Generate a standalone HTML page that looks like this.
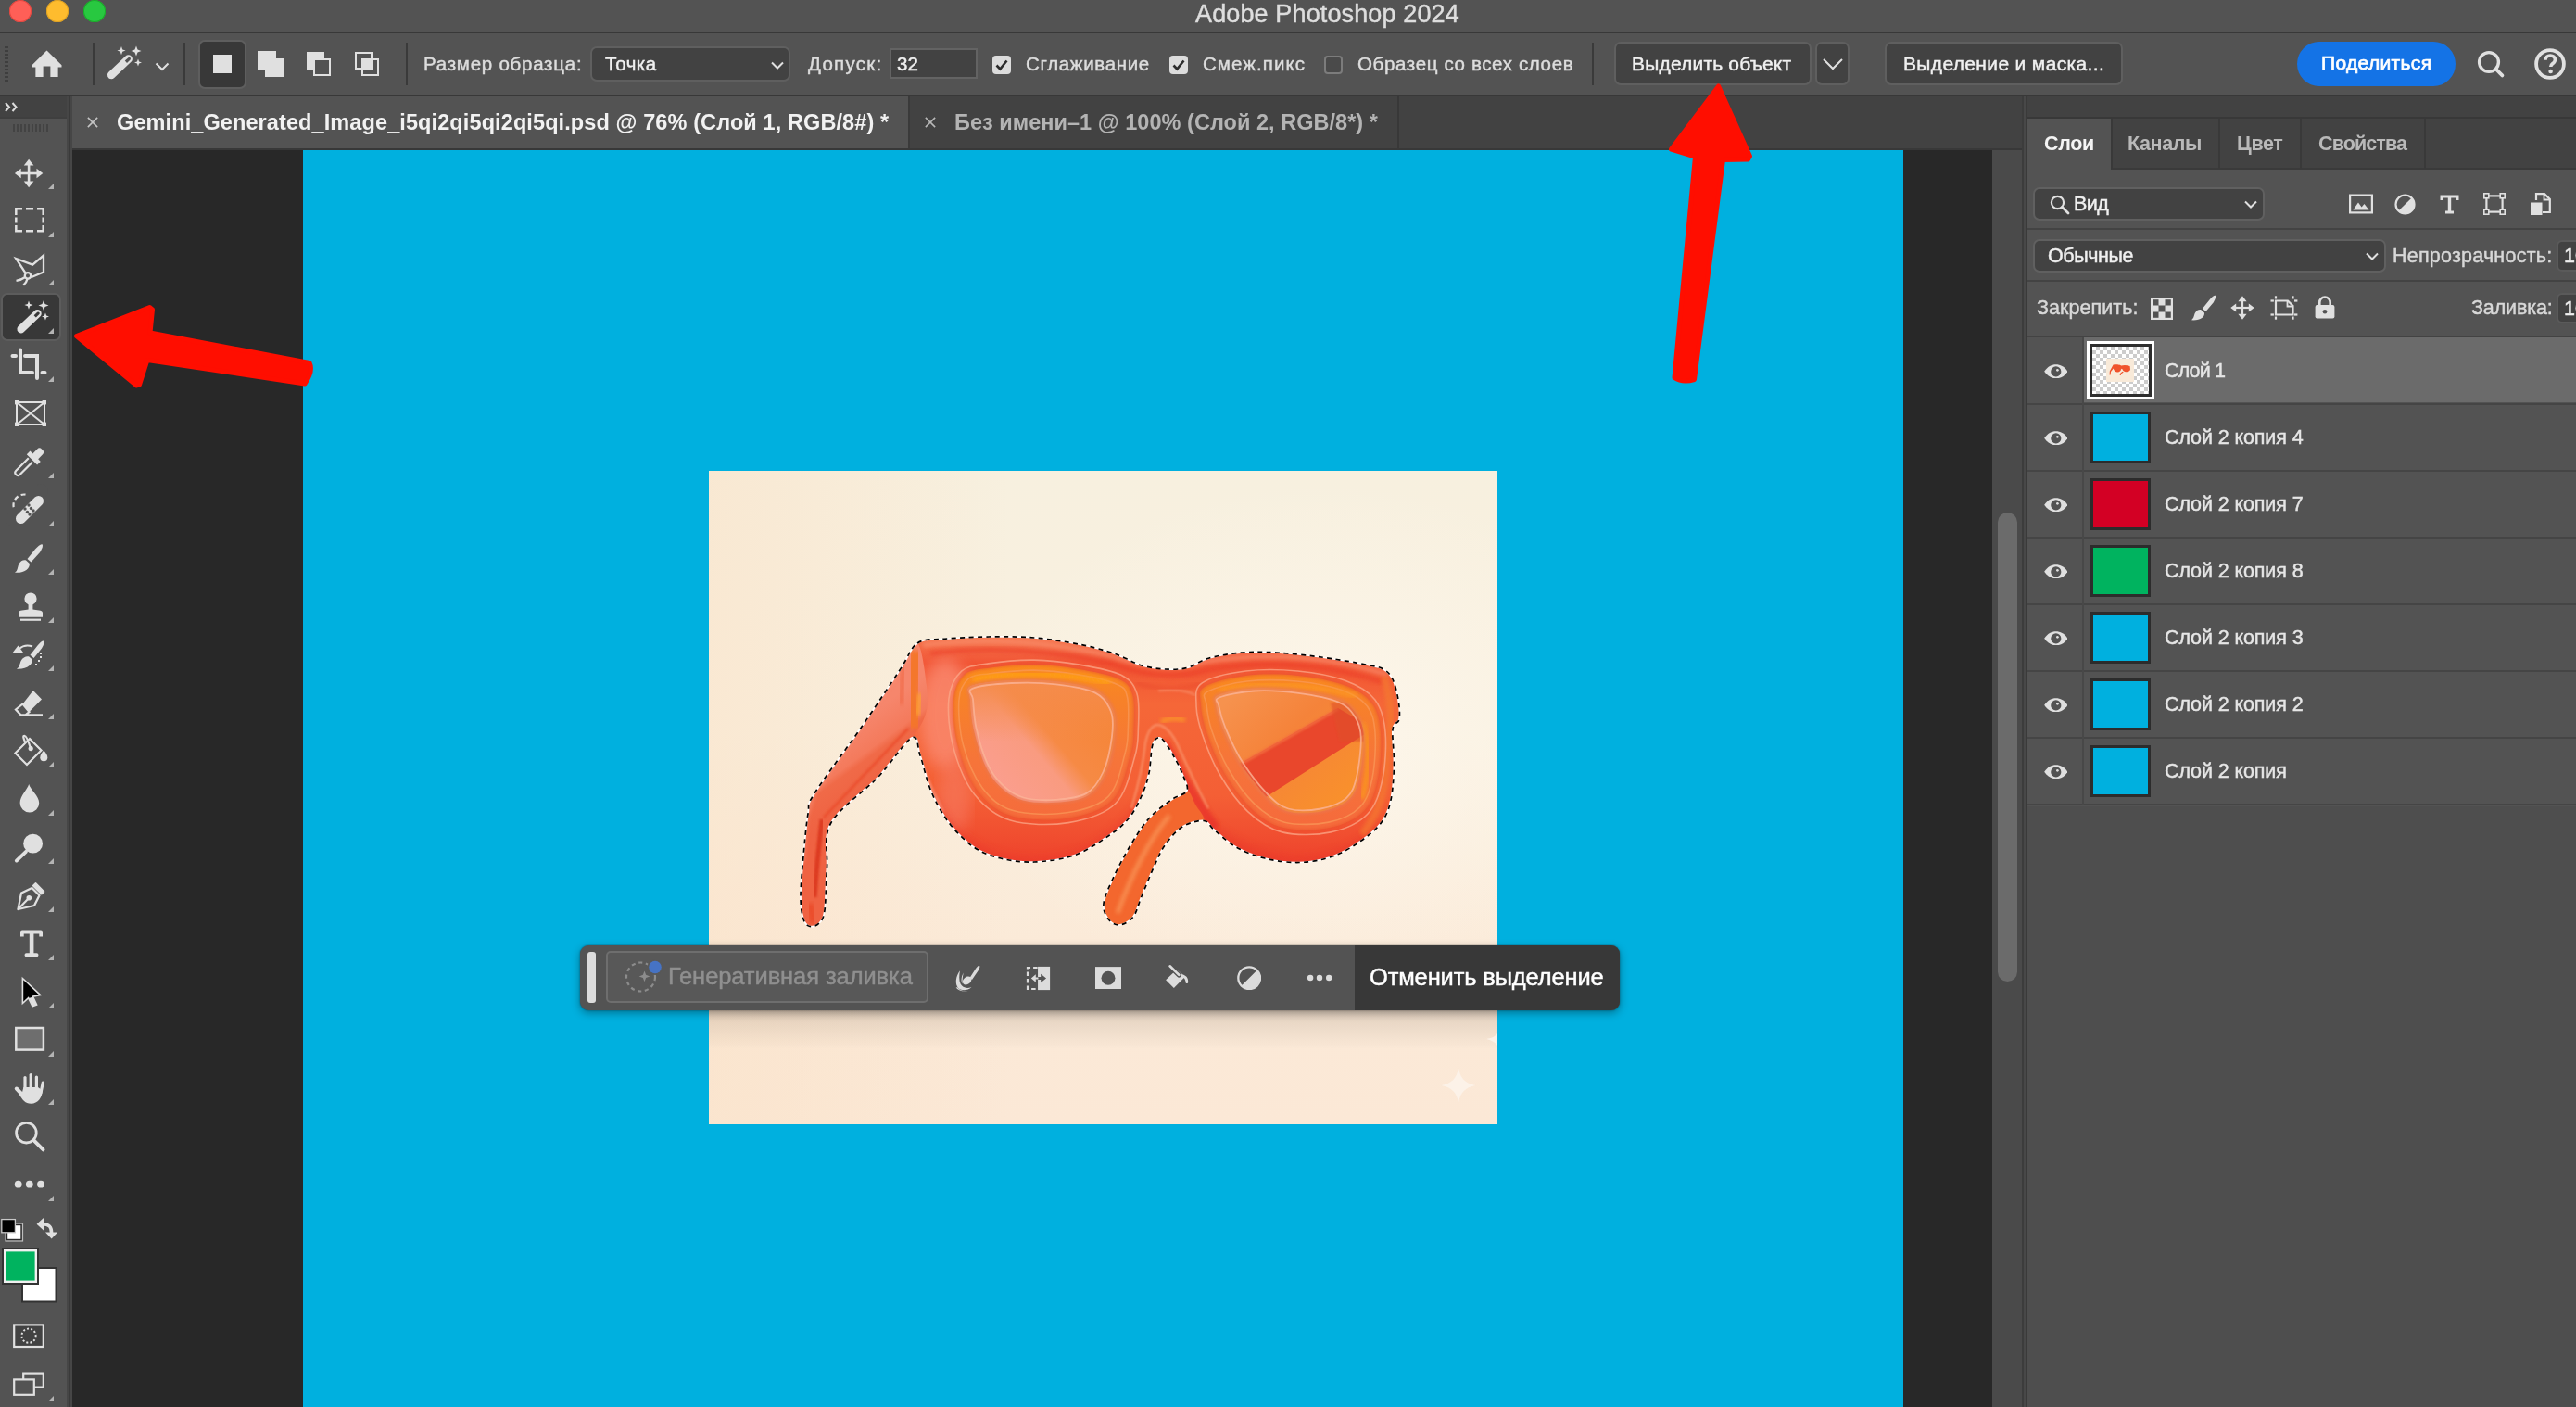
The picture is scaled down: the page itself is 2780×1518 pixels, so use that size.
<!DOCTYPE html>
<html lang="ru">
<head>
<meta charset="utf-8">
<title>Adobe Photoshop 2024</title>
<style>
*{box-sizing:border-box;margin:0;padding:0}
html,body{width:2780px;height:1518px;overflow:hidden;background:#535353}
body{position:relative;font-family:"Liberation Sans",sans-serif;color:#dddddd;-webkit-font-smoothing:antialiased}
.abs{position:absolute}
.t{position:absolute;white-space:nowrap;line-height:1;transform-origin:0 0;will-change:transform;-webkit-text-stroke:0.45px currentColor;paint-order:stroke fill}
.vline{position:absolute;width:2px;background:#3a3a3a}
.hline{position:absolute;height:2px;background:#383838}
/* ---- title bar ---- */
#titlebar{left:0;top:0;width:2780px;height:34px;background:#535353}
.tl{position:absolute;top:0;width:24px;height:24px;border-radius:50%}
/* ---- options bar ---- */
#optbar{left:0;top:36px;width:2780px;height:66px;background:#535353}
.btn{position:absolute;background:#424242;border:2px solid #5f5f5f;border-radius:7px}
.field{position:absolute;background:#424242;border:2px solid #636363}
.cb{position:absolute;width:20px;height:20px;border-radius:4px}
/* ---- doc tabs ---- */
#tabbar{left:78px;top:104px;width:2104px;height:56px;background:#424242}
/* ---- canvas ---- */
#paste{left:78px;top:162px;width:2072px;height:1356px;background:#282828;overflow:hidden}
#blue{left:327px;top:162px;width:1727px;height:1356px;background:#00b0df}
#cream{left:765px;top:508px;width:851px;height:705px;background:radial-gradient(ellipse 45% 40% at 78% 42%,rgba(253,247,236,0.9),rgba(253,247,236,0) 100%),linear-gradient(90deg,rgba(250,226,200,0.55) 0%,rgba(250,226,200,0) 38%),linear-gradient(180deg,#f7f0df 0%,#f9f0df 40%,#fbead8 72%,#fbe8d6 100%)}
/* ---- right panel ---- */
#rpanel{left:2188px;top:104px;width:592px;height:1414px;background:#535353}
.lrow{position:absolute;left:2188px;width:592px;height:72px;border-bottom:2px solid #454545}
.thumb{position:absolute;left:2256px;width:65px;height:55px;border:3px solid #2b2b2b}
.lname{font-size:21.5px;color:#e6e6e6;left:2336px}
</style>
</head>
<body>

<!-- ================= TITLE BAR ================= -->
<div id="titlebar" class="abs"></div>
<div class="tl" style="left:10px;background:#ff5f57;box-shadow:inset 0 0 0 1px #e2463f"></div>
<div class="tl" style="left:50px;background:#febc2e;box-shadow:inset 0 0 0 1px #dea123"></div>
<div class="tl" style="left:90px;background:#28c840;box-shadow:inset 0 0 0 1px #1aab29"></div>
<div class="t" id="title" style="letter-spacing:0.13px;left:1290px;top:2px;font-size:27px;color:#dedede">Adobe Photoshop 2024</div>
<div class="hline" style="left:0;top:34px;width:2780px;background:#383838"></div>

<!-- ================= OPTIONS BAR ================= -->
<div id="optbar" class="abs"></div>

<!-- grip -->
<div class="abs" style="left:5px;top:50px;width:4px;height:38px;background:repeating-linear-gradient(180deg,#3e3e3e 0 2px,transparent 2px 4px)"></div>
<!-- home -->
<svg class="abs" style="left:33.5px;top:54px" width="33" height="29.5" viewBox="0 0 34 31" preserveAspectRatio="none"><path d="M17 0.5 L33.5 17 L33.5 19.5 L29.5 19.5 L29.5 30.5 L21 30.5 L21 18.5 L13 18.5 L13 30.5 L4.5 30.5 L4.5 19.5 L0.5 19.5 L0.5 17 Z" fill="#e0e0e0"/></svg>
<div class="vline" style="left:100px;top:46px;height:46px"></div>
<!-- wand (options) -->
<svg class="abs" style="left:114px;top:48px" width="42" height="40" viewBox="0 0 42 40">
 <g fill="#e0e0e0">
  <path d="M6.2 37.2 a4.3 4.3 0 0 1 -3.2 -7.2 L21.5 12.6 a4.3 4.3 0 0 1 6.2 6 L9.2 36 a4.3 4.3 0 0 1 -3 1.2z"/>
  <path d="M17 2 l1.2 3.4 l3.4 1.2 l-3.4 1.2 l-1.2 3.4 l-1.2 -3.4 l-3.4 -1.2 l3.4 -1.2z"/>
  <path d="M33 1.5 l1.5 4 l4 1.5 l-4 1.5 l-1.5 4 l-1.5 -4 l-4 -1.5 l4 -1.5z"/>
  <path d="M35 15.5 l1.1 2.9 l2.9 1.1 l-2.9 1.1 l-1.1 2.9 l-1.1 -2.9 l-2.9 -1.1 l2.9 -1.1z"/>
 </g>
 <path d="M20.8 17.6 L24.4 14.2 a1.6 1.6 0 0 1 2.2 2.3 L23 20z" fill="#535353"/>
</svg>
<svg class="abs" style="left:167px;top:67px" width="16" height="10" viewBox="0 0 16 10"><path d="M1.5 1.5 L8 8 L14.5 1.5" fill="none" stroke="#e0e0e0" stroke-width="2"/></svg>
<div class="vline" style="left:198px;top:46px;height:46px"></div>
<!-- selection mode buttons -->
<div class="abs" style="left:214px;top:42.5px;width:52px;height:53.5px;background:#383838;border:2px solid #5e5e5e;border-radius:7px"></div>
<div class="abs" style="left:230px;top:59px;width:20px;height:20px;background:#e0e0e0"></div>
<div class="abs" style="left:278px;top:55px;width:20px;height:20px;background:#e0e0e0"></div>
<div class="abs" style="left:286px;top:63px;width:20px;height:20px;background:#e0e0e0"></div>
<div class="abs" style="left:331px;top:56px;width:19px;height:19px;background:#e0e0e0"></div>
<div class="abs" style="left:338px;top:63px;width:19px;height:19px;background:#535353;border:2px solid #e0e0e0"></div>
<div class="abs" style="left:383px;top:56px;width:19px;height:19px;border:2px solid #e0e0e0"></div>
<div class="abs" style="left:390px;top:63px;width:19px;height:19px;border:2px solid #e0e0e0"></div>
<div class="abs" style="left:392px;top:65px;width:8px;height:8px;background:#e0e0e0"></div>
<div class="vline" style="left:438px;top:46px;height:46px"></div>
<div class="t" id="o1" style="letter-spacing:0.75px;left:457px;top:59px;font-size:20.5px">Размер образца:</div>
<div class="btn" style="left:637px;top:50px;width:216px;height:38px"></div>
<div class="t" id="o2" style="letter-spacing:0.43px;left:653px;top:59px;font-size:20.5px;color:#f0f0f0">Точка</div>
<svg class="abs" style="left:832px;top:66px" width="14" height="10" viewBox="0 0 14 10"><path d="M1 1.5 L7 7.5 L13 1.5" fill="none" stroke="#e0e0e0" stroke-width="2"/></svg>
<div class="t" id="o3" style="letter-spacing:1.28px;left:872px;top:59px;font-size:20.5px">Допуск:</div>
<div class="field" style="left:960px;top:52px;width:95px;height:33px"></div>
<div class="t" id="o4" style="left:968px;top:59px;font-size:20.5px;color:#f0f0f0">32</div>
<div class="cb" style="left:1071px;top:60px;background:#dcdcdc"></div>
<svg class="abs" style="left:1071px;top:60px" width="20" height="20" viewBox="0 0 20 20"><path d="M4.5 10.5 L8.3 14.5 L15.5 5.5" fill="none" stroke="#2c2c2c" stroke-width="2.6"/></svg>
<div class="t" id="o5" style="letter-spacing:0.66px;left:1107px;top:59px;font-size:20.5px">Сглаживание</div>
<div class="cb" style="left:1262px;top:60px;background:#dcdcdc"></div>
<svg class="abs" style="left:1262px;top:60px" width="20" height="20" viewBox="0 0 20 20"><path d="M4.5 10.5 L8.3 14.5 L15.5 5.5" fill="none" stroke="#2c2c2c" stroke-width="2.6"/></svg>
<div class="t" id="o6" style="letter-spacing:1.05px;left:1298px;top:59px;font-size:20.5px">Смеж.пикс</div>
<div class="cb" style="left:1429px;top:60px;background:#4a4a4a;border:2px solid #7c7c7c"></div>
<div class="t" id="o7" style="letter-spacing:0.64px;left:1465px;top:59px;font-size:20.5px">Образец со всех слоев</div>
<div class="vline" style="left:1718px;top:46px;height:46px"></div>
<div class="btn" style="left:1742px;top:45px;width:213px;height:47px"></div>
<div class="t" id="o8" style="letter-spacing:0.18px;left:1761px;top:58px;font-size:21px;color:#f0f0f0">Выделить объект</div>
<div class="btn" style="left:1959px;top:45px;width:37px;height:47px"></div>
<svg class="abs" style="left:1966px;top:62px" width="24" height="14" viewBox="0 0 24 14"><path d="M2 2 L12 12 L22 2" fill="none" stroke="#e0e0e0" stroke-width="2"/></svg>
<div class="btn" style="left:2034px;top:45px;width:257px;height:47px"></div>
<div class="t" id="o9" style="letter-spacing:0.35px;left:2054px;top:58px;font-size:21px;color:#f0f0f0">Выделение и маска...</div>
<div class="abs" style="left:2479px;top:45px;width:171px;height:48px;border-radius:24px;background:#1473e6"></div>
<div class="t" id="o10" style="letter-spacing:0.34px;left:2505px;top:57px;font-size:21px;color:#ffffff;-webkit-text-stroke:0.7px #fff">Поделиться</div>
<svg class="abs" style="left:2672px;top:53px" width="34" height="34" viewBox="0 0 34 34"><circle cx="14" cy="14" r="10.4" fill="none" stroke="#e0e0e0" stroke-width="3.4"/><path d="M22 22 L28.4 28.4" stroke="#e0e0e0" stroke-width="3.8" stroke-linecap="round"/></svg>
<svg class="abs" style="left:2734px;top:51px" width="36" height="36" viewBox="0 0 36 36"><circle cx="18" cy="18" r="14.9" fill="none" stroke="#e0e0e0" stroke-width="3.8"/><path d="M13 13.8 c0 -3 2.2 -4.8 5.2 -4.8 c3 0 5.2 1.7 5.2 4.4 c0 2.2 -1.3 3.2 -2.8 4.3 c-1.3 1 -1.9 1.6 -1.9 3.3" fill="none" stroke="#e0e0e0" stroke-width="3.6"/><circle cx="18.6" cy="26" r="2.3" fill="#e0e0e0"/></svg>
<div class="hline" style="left:0;top:102px;width:2780px;background:#383838"></div>

<!-- ================= DOC TAB BAR ================= -->
<div id="tabbar" class="abs"></div>
<div class="abs" style="left:78px;top:104px;width:902px;height:56px;background:#535353"></div>
<div class="vline" style="left:980px;top:104px;height:56px;background:#3a3a3a"></div>
<div class="vline" style="left:1508px;top:104px;height:56px;background:#383838"></div>
<svg class="abs" style="left:94px;top:126px" width="12" height="12" viewBox="0 0 14 14"><path d="M1 1 L13 13 M13 1 L1 13" stroke="#c4c4c4" stroke-width="1.8"/></svg>
<div class="t" id="tab1" style="letter-spacing:0.10px;left:126px;top:121px;font-size:23.5px;font-weight:bold;-webkit-text-stroke:0;color:#f2f2f2">Gemini_Generated_Image_i5qi2qi5qi2qi5qi.psd @ 76% (Слой 1, RGB/8#) *</div>
<svg class="abs" style="left:998px;top:126px" width="12" height="12" viewBox="0 0 14 14"><path d="M1 1 L13 13 M13 1 L1 13" stroke="#b8b8b8" stroke-width="1.8"/></svg>
<div class="t" id="tab2" style="letter-spacing:0.03px;left:1030px;top:121px;font-size:23.5px;font-weight:bold;-webkit-text-stroke:0;color:#b4b4b4">Без имени–1 @ 100% (Слой 2, RGB/8*) *</div>
<div class="hline" style="left:78px;top:160px;width:2104px;background:#383838"></div>



<!-- ================= LEFT TOOLBAR ================= -->
<div class="abs" style="left:0;top:104px;width:72px;height:1414px;background:#535353"></div>
<div class="abs" style="left:0;top:104px;width:72px;height:22px;background:#424242"></div>
<div class="hline" style="left:0;top:126px;width:72px;background:#3f3f3f"></div>
<div class="abs" style="left:72px;top:104px;width:6px;height:1414px;background:#464646"></div>
<div class="abs" style="left:74px;top:104px;width:2px;height:1414px;background:#3a3a3a"></div>
<svg class="abs" style="left:5px;top:110px" width="15" height="11" viewBox="0 0 15 11"><path d="M1 1 L5 5.5 L1 10 M8.5 1 L12.5 5.5 L8.5 10" fill="none" stroke="#dcdcdc" stroke-width="2"/></svg>
<div class="abs" style="left:14px;top:134px;width:38px;height:8px;background:repeating-linear-gradient(90deg,#434343 0 2px,transparent 2px 4px)"></div>
<!-- selected tool bg -->
<div class="abs" style="left:1px;top:316px;width:65px;height:52px;background:#383838;border:2px solid #5c5c5c;border-radius:7px"></div>
<!--TOOLS_START--><svg class="abs" style="left:0;top:104px" width="72" height="1414" viewBox="0 104 72 1414">
<g fill="#e0e0e0" stroke="none"><rect x="29.8" y="176" width="2.6" height="22"/><rect x="20" y="185.7" width="22" height="2.6"/>
<path d="M31.1 171.8 L36.4 178.6 L25.8 178.6 Z M31.1 202.2 L36.4 195.4 L25.8 195.4 Z M15.9 187 L22.7 181.7 L22.7 192.3 Z M46.3 187 L39.5 181.7 L39.5 192.3 Z"/></g><path d="M58 198 L58 204 L52 204 Z" fill="#b4b4b4"/>
<path d="M17.3 232 V225.3 H24 M28 225.3 H36 M40 225.3 H46.7 V232 M46.7 234.5 V240.5 M46.7 243 V249.2 H40 M36 249.2 H28 M24 249.2 H17.3 V243 M17.3 240.5 V234.5" fill="none" stroke="#e0e0e0" stroke-width="2.5"/><path d="M58 250 L58 256 L52 256 Z" fill="#b4b4b4"/>
<g fill="none" stroke="#e0e0e0" stroke-width="2.3" stroke-linejoin="miter"><path d="M27.6 294.6 L17.3 279 L35.2 285.6 L47 275.6 V293.6 L33.4 299.2"/><circle cx="30" cy="297.4" r="3.2"/><path d="M27.2 299 Q23 302 17.5 302.8 M29.6 300.6 Q28.5 305 25.3 307.6"/></g><path d="M58 302 L58 308 L52 308 Z" fill="#b4b4b4"/>
<g fill="#e0e0e0"><path d="M22.6 359.4 a4.3 4.3 0 0 1 -3.2 -7.2 L37.3 335.2 a4.3 4.3 0 0 1 6.2 6 L25.6 358.2 a4.3 4.3 0 0 1 -3 1.2z"/>
<path d="M31 324.5 l1.2 3.4 l3.4 1.2 l-3.4 1.2 l-1.2 3.4 l-1.2 -3.4 l-3.4 -1.2 l3.4 -1.2z"/>
<path d="M47 324 l1.5 4 l4 1.5 l-4 1.5 l-1.5 4 l-1.5 -4 l-4 -1.5 l4 -1.5z"/>
<path d="M49 337.5 l1.1 2.9 l2.9 1.1 l-2.9 1.1 l-1.1 2.9 l-1.1 -2.9 l-2.9 -1.1 l2.9 -1.1z"/></g>
<path d="M36.6 340.2 L40.2 336.8 a1.6 1.6 0 0 1 2.2 2.3 L38.8 342.6z" fill="#383838"/><path d="M58 354 L58 360 L52 360 Z" fill="#b4b4b4"/>
<g fill="none" stroke="#e0e0e0" stroke-width="4" stroke-linecap="round"><path d="M22 377.5 V402 H35 M27 384 H40 V408 M13.5 384 H17 M45.5 402 H48.5"/></g><path d="M58 406 L58 412 L52 412 Z" fill="#b4b4b4"/>
<g fill="none" stroke="#e0e0e0" stroke-width="2"><rect x="18" y="434" width="30" height="24"/><path d="M18 434 L48 458 M48 434 L18 458"/></g><g fill="#e0e0e0"><rect x="16" y="432" width="4.4" height="4.4"/><rect x="45.6" y="432" width="4.4" height="4.4"/><rect x="16" y="455.6" width="4.4" height="4.4"/><rect x="45.6" y="455.6" width="4.4" height="4.4"/></g>
<g><path d="M35 498.5 L21.5 512 a2.9 2.9 0 0 1 -4.2 -4.2 L30.8 494.3" fill="none" stroke="#e0e0e0" stroke-width="2.2"/>
<path d="M28.8 490.3 L32.5 486.6 L35.3 489.4 L40 484.7 a3.6 3.6 0 0 1 5.2 0 l0.6 0.6 a3.6 3.6 0 0 1 0 5.2 L41.2 495.3 L43.8 497.9 L40.1 501.6 Z" fill="#e0e0e0"/></g><path d="M58 510 L58 516 L52 516 Z" fill="#b4b4b4"/>
<g><circle cx="26" cy="545" r="11.5" fill="none" stroke="#e0e0e0" stroke-width="2.2" stroke-dasharray="5 3.4"/>
<path d="M14 560 L44 530" stroke="#535353" stroke-width="16" stroke-linecap="round"/>
<path d="M22.5 559.5 L41.5 540.5" stroke="#e0e0e0" stroke-width="11" stroke-linecap="round"/>
<g fill="#535353"><circle cx="29.5" cy="552.5" r="1.7"/><circle cx="33.5" cy="548.5" r="1.7"/><circle cx="27" cy="549" r="1.7"/><circle cx="31" cy="545" r="1.7"/><circle cx="36" cy="551" r="1.7"/><circle cx="32" cy="555" r="1.7"/></g></g><path d="M58 562 L58 568 L52 568 Z" fill="#b4b4b4"/>
<g fill="#e0e0e0"><path d="M45.3 587.2 C46.8 587.8 45.8 591.5 43 596 L33.5 606.5 L29.5 603 L38 592.5 C41 589 44 586.7 45.3 587.2z"/>
<path d="M28 604.5 L31.8 608 C32.5 613 27 618.5 16 617.8 C19.5 615.5 18.5 612.5 20.3 608.8 C22 605 25.5 603.8 28 604.5z"/></g><path d="M58 614 L58 620 L52 620 Z" fill="#b4b4b4"/>
<g fill="#e0e0e0"><circle cx="33" cy="646" r="6.6"/><path d="M30.6 650 H35.4 V657.5 C39 658.3 46 658 46 661 V665.8 H20 V661 C20 658 27 658.3 30.6 657.5z"/><rect x="22" y="667.6" width="22" height="2.2"/></g><path d="M58 666 L58 672 L52 672 Z" fill="#b4b4b4"/>
<g fill="#e0e0e0"><path d="M47 691.5 C48.4 692.1 47.5 695.5 45 699.5 L36.5 710 L32.5 706.8 L40.5 696.5 C43.3 693 46 691 47 691.5z"/>
<path d="M31 708.3 L34.8 711.6 C35.4 716.5 30 722.4 18 721.8 C21.5 719.5 21 716.5 22.8 712.8 C24.6 709 28.5 707.6 31 708.3z"/>
<path d="M13.8 704 L19.5 696.4 L25 704 Z"/><rect x="43" y="704" width="2" height="2"/><rect x="43" y="708" width="2" height="2"/><rect x="41" y="712" width="2" height="2"/><rect x="38" y="716" width="2" height="2"/></g>
<path d="M20.5 700 Q27 694.5 35 697.5" fill="none" stroke="#e0e0e0" stroke-width="2"/><path d="M58 718 L58 724 L52 724 Z" fill="#b4b4b4"/>
<g><path d="M35.8 745 L45 754.5 L31.5 768 L24.5 759.5 Z" fill="#e0e0e0"/><path d="M24.5 759.5 L17 765.5 L22.5 771.3 H46 M24.5 759.5 L31.5 768 L27.5 771.3" fill="none" stroke="#e0e0e0" stroke-width="2.2"/></g><path d="M58 770 L58 776 L52 776 Z" fill="#b4b4b4"/>
<g fill="none" stroke="#e0e0e0" stroke-width="2.2"><path d="M32 797 L44.5 809.5 L29 825 L16.5 812.5 Z"/><path d="M27.5 801.5 C25 796 24.5 793.8 26.5 793.8 C28.5 793.8 30.5 799 33 807.5"/></g><circle cx="33.2" cy="807.6" r="2.6" fill="#e0e0e0"/>
<path d="M47.3 809.5 C50 812.5 51.3 815 51.3 817.3 a4 4 0 0 1 -8 0 C43.3 815 44.6 812.5 47.3 809.5z" fill="#e0e0e0"/><path d="M58 822 L58 828 L52 828 Z" fill="#b4b4b4"/>
<path d="M31.2 846 C32.5 852 42.2 858.5 42.2 866.3 a10.3 10.3 0 0 1 -20.6 0 C21.6 858.5 29.5 852 31.2 846z" fill="#e0e0e0"/><path d="M58 874 L58 880 L52 880 Z" fill="#b4b4b4"/>
<circle cx="35.6" cy="910.2" r="10.4" fill="#e0e0e0"/><path d="M28 918.8 L17.8 928.6" stroke="#e0e0e0" stroke-width="3.8" stroke-linecap="round"/><path d="M58 926 L58 932 L52 932 Z" fill="#b4b4b4"/>
<g><path d="M38.5 952.8 L47.6 962 L44.8 964.8 L35.7 955.6 Z" fill="#e0e0e0" stroke="#e0e0e0" stroke-width="1.5" stroke-linejoin="round"/>
<path d="M34.5 958 L42.5 966 L37 977 L19.5 981 L23 963.5 Z" fill="none" stroke="#e0e0e0" stroke-width="2.3" stroke-linejoin="round"/>
<path d="M19.5 981 L30.5 969.5" stroke="#e0e0e0" stroke-width="2.2"/><circle cx="31.3" cy="968.7" r="2.8" fill="#e0e0e0"/></g><path d="M58 978 L58 984 L52 984 Z" fill="#b4b4b4"/>
<path d="M22 1005.6 a2 2 0 0 1 2 -2 H44 a2 2 0 0 1 2 2 V1010.5 H42.3 V1007.6 H36.4 V1028.2 H39.5 a2 2 0 0 1 0 4 H28.5 a2 2 0 0 1 0 -4 H31.8 V1007.6 H25.7 V1010.5 H22 Z" fill="#e0e0e0"/><path d="M58 1030 L58 1036 L52 1036 Z" fill="#b4b4b4"/>
<path d="M24.4 1055.5 V1082.5 L30.6 1076.6 L35 1085.8 L39.6 1084 L35.4 1075.2 L43.6 1073.6 Z" fill="#000" stroke="#e0e0e0" stroke-width="1.6" stroke-linejoin="miter"/><path d="M31 1077 L35.6 1075.5 L39.6 1084 L35 1085.8 Z" fill="#e0e0e0"/><path d="M58 1082 L58 1088 L52 1088 Z" fill="#b4b4b4"/>
<rect x="17.3" y="1109" width="29.6" height="23.6" fill="#6e6e6e" stroke="#e0e0e0" stroke-width="2.5"/><path d="M58 1134 L58 1140 L52 1140 Z" fill="#b4b4b4"/>
<g fill="none" stroke="#e0e0e0" stroke-linecap="round"><path d="M27 1162.5 V1176" stroke-width="3.2"/><path d="M33.2 1159.5 V1175" stroke-width="3.2"/><path d="M39.4 1162 V1176" stroke-width="3.2"/><path d="M46.3 1168 L44 1179" stroke-width="3.2"/><path d="M17.8 1174.5 L25 1182" stroke-width="4"/></g>
<path d="M25.4 1173 H41 L45.8 1176.5 C45.5 1184 41 1190.8 33.5 1190.8 C27 1190.8 24.5 1186.5 21 1181.5 L24 1178.5 Z" fill="#e0e0e0"/><path d="M58 1186 L58 1192 L52 1192 Z" fill="#b4b4b4"/>
<circle cx="28.4" cy="1222.2" r="10.8" fill="none" stroke="#e0e0e0" stroke-width="2.8"/><path d="M36.8 1230.6 L46.6 1240.4" stroke="#e0e0e0" stroke-width="3.8" stroke-linecap="round"/>
<g fill="#e0e0e0"><circle cx="19.7" cy="1277.7" r="3.9"/><circle cx="31.8" cy="1277.7" r="3.9"/><circle cx="44" cy="1277.7" r="3.9"/></g><path d="M58 1290 L58 1296 L52 1296 Z" fill="#b4b4b4"/>
<rect x="7.5" y="1321.5" width="15.5" height="16" fill="#fff" stroke="#2a2a2a" stroke-width="1.4"/><rect x="6" y="1320" width="18.5" height="19" fill="none" stroke="#bdbdbd" stroke-width="1.2"/>
<rect x="1.8" y="1315.6" width="14.6" height="14.2" fill="#000" stroke="#c8c8c8" stroke-width="1.3"/>
<path d="M46 1320.8 C53 1320.8 55.6 1323.5 55.6 1330" fill="none" stroke="#e0e0e0" stroke-width="3.6"/><path d="M39.6 1320.8 L47 1314 V1327.6 Z M55.6 1336.6 L49 1329.4 H62.2 Z" fill="#e0e0e0"/>
<rect x="24" y="1368" width="36.5" height="36.5" fill="#fff" stroke="#333" stroke-width="2"/>
<rect x="2" y="1346" width="40" height="40" fill="#333"/><rect x="4" y="1348" width="36" height="36" fill="#f0f0f0"/><rect x="6.4" y="1350.4" width="31.2" height="31.2" fill="#00b35f"/>
<rect x="15.2" y="1429.4" width="31.6" height="23.6" fill="#424242" stroke="#e0e0e0" stroke-width="2.2"/><circle cx="31" cy="1441.2" r="7.6" fill="none" stroke="#e0e0e0" stroke-width="2" stroke-dasharray="2 2.2"/>
<rect x="25.2" y="1481.6" width="21.6" height="15" fill="#535353" stroke="#e0e0e0" stroke-width="2.2"/><rect x="15.2" y="1488.4" width="21.6" height="16.4" fill="#535353" stroke="#e0e0e0" stroke-width="2.2"/><path d="M58 1506 L58 1512 L52 1512 Z" fill="#b4b4b4"/>
</svg><!--TOOLS_END-->

<!-- ================= CANVAS ================= -->
<div id="paste" class="abs"></div>
<div id="blue" class="abs"></div>
<div id="cream" class="abs"></div>
<!--GL_START--><svg class="abs" style="left:765px;top:508px" width="851" height="705" viewBox="765 508 851 705">
<defs>
<linearGradient id="gF" gradientUnits="userSpaceOnUse" x1="0" y1="686" x2="0" y2="932"><stop offset="0" stop-color="#f67a52"/><stop offset="0.12" stop-color="#f15434"/><stop offset="0.3" stop-color="#f56738"/><stop offset="0.7" stop-color="#f45f35"/><stop offset="1" stop-color="#ee422c"/></linearGradient>
<linearGradient id="gLL" gradientUnits="userSpaceOnUse" x1="1068" y1="862" x2="1196" y2="752"><stop offset="0" stop-color="#fb9f92"/><stop offset="0.42" stop-color="#f99b80"/><stop offset="0.56" stop-color="#f68a45"/><stop offset="1" stop-color="#f58434"/></linearGradient>
<linearGradient id="gLLt" gradientUnits="userSpaceOnUse" x1="0" y1="736" x2="0" y2="800"><stop offset="0" stop-color="#f58c4c" stop-opacity="0.95"/><stop offset="1" stop-color="#f58c4c" stop-opacity="0"/></linearGradient>
<linearGradient id="gLR" gradientUnits="userSpaceOnUse" x1="1330" y1="750" x2="1450" y2="880"><stop offset="0" stop-color="#f6924e"/><stop offset="0.4" stop-color="#f5833a"/><stop offset="1" stop-color="#f9922a"/></linearGradient>
<linearGradient id="gRim" gradientUnits="userSpaceOnUse" x1="0" y1="716" x2="0" y2="895"><stop offset="0" stop-color="#fa8c1c"/><stop offset="0.2" stop-color="#f78228"/><stop offset="0.6" stop-color="#f6743a"/><stop offset="1" stop-color="#f56a3c"/></linearGradient>
<linearGradient id="gTL" gradientUnits="userSpaceOnUse" x1="905" y1="795" x2="945" y2="850"><stop offset="0" stop-color="#f6866c"/><stop offset="0.45" stop-color="#f47a5c"/><stop offset="0.55" stop-color="#f06a48"/><stop offset="1" stop-color="#ef6242"/></linearGradient>
<clipPath id="cLR"><path d="M1314.7 749.8 C1321.6 746.6 1338.9 743.3 1353.4 742.5 C1367.9 741.7 1386.4 742.9 1401.7 744.9 C1417.0 746.9 1434.7 750.2 1445.2 754.6 C1455.7 759.0 1460.1 764.6 1464.5 771.5 C1468.9 778.4 1471.4 784.4 1471.8 795.7 C1472.2 807.0 1469.7 827.9 1466.9 839.2 C1464.1 850.5 1461.7 857.3 1454.9 863.3 C1448.1 869.3 1436.8 873.4 1425.9 875.4 C1415.0 877.4 1399.7 878.2 1389.6 875.4 C1379.5 872.6 1373.9 867.0 1365.4 858.5 C1357.0 850.0 1346.6 836.8 1338.9 824.7 C1331.2 812.6 1323.9 796.5 1319.5 786.0 C1315.1 775.5 1313.1 767.8 1312.3 761.8 C1311.5 755.8 1307.8 753.0 1314.7 749.8Z"/></clipPath>
<clipPath id="cLL"><path d="M1048.2 740.1 C1055.7 736.7 1076.4 734.8 1091.7 734.0 C1107.0 733.2 1124.7 733.5 1140.0 735.3 C1155.3 737.1 1173.2 739.7 1183.5 744.9 C1193.8 750.1 1198.5 758.2 1201.7 766.7 C1204.9 775.2 1204.3 784.4 1202.9 795.7 C1201.5 807.0 1198.0 823.8 1193.2 834.3 C1188.4 844.8 1182.8 853.2 1173.9 858.5 C1165.0 863.8 1151.7 865.0 1140.0 865.8 C1128.3 866.6 1113.9 866.2 1103.8 863.4 C1093.7 860.6 1086.4 855.3 1079.6 848.9 C1072.8 842.5 1067.5 835.2 1062.7 824.7 C1057.9 814.2 1053.2 797.7 1050.6 786.0 C1048.0 774.3 1047.4 762.2 1047.0 754.6 C1046.6 747.0 1040.8 743.5 1048.2 740.1Z"/></clipPath>
<clipPath id="cS"><path d="M990.0 694.0 C998.0 688.4 1006.2 690.5 1019.0 689.3 C1031.8 688.1 1050.8 687.2 1067.0 687.0 C1083.2 686.8 1099.8 686.7 1116.0 688.0 C1132.2 689.3 1150.7 692.5 1164.0 695.0 C1177.3 697.5 1187.7 700.5 1196.0 703.0 C1204.3 705.5 1208.0 707.5 1214.0 710.0 C1220.0 712.5 1224.8 716.0 1232.0 718.0 C1239.2 720.0 1248.8 721.6 1257.0 722.0 C1265.2 722.4 1273.0 722.5 1281.0 720.5 C1289.0 718.5 1295.0 712.8 1305.0 710.0 C1315.0 707.2 1329.0 705.0 1341.0 704.0 C1353.0 703.0 1362.8 703.2 1377.0 704.0 C1391.2 704.8 1409.8 706.8 1426.0 709.0 C1442.2 711.2 1462.8 714.8 1474.0 717.0 C1485.2 719.2 1488.2 719.3 1493.0 722.0 C1497.8 724.7 1500.3 727.5 1503.0 733.0 C1505.7 738.5 1507.8 747.8 1509.0 755.0 C1510.2 762.2 1511.0 770.7 1510.0 776.0 C1509.0 781.3 1503.9 778.8 1503.0 787.0 C1502.1 795.2 1504.8 812.3 1504.5 825.0 C1504.2 837.7 1503.2 852.7 1501.0 863.0 C1498.8 873.3 1496.3 879.7 1491.0 887.0 C1485.7 894.3 1477.8 900.8 1469.0 907.0 C1460.2 913.2 1449.2 920.1 1438.0 924.0 C1426.8 927.9 1414.2 930.2 1402.0 930.5 C1389.8 930.8 1376.3 928.8 1365.0 926.0 C1353.7 923.2 1343.2 919.2 1334.0 914.0 C1324.8 908.8 1315.8 899.8 1310.0 895.0 C1304.2 890.2 1304.7 886.0 1299.0 885.5 C1293.3 885.0 1283.0 887.6 1276.0 892.0 C1269.0 896.4 1262.2 904.7 1257.0 912.0 C1251.8 919.3 1249.2 926.8 1245.0 936.0 C1240.8 945.2 1235.7 958.2 1232.0 967.0 C1228.3 975.8 1227.0 983.8 1223.0 989.0 C1219.0 994.2 1212.5 997.6 1208.0 998.0 C1203.5 998.4 1198.8 995.3 1196.0 991.5 C1193.2 987.7 1190.2 982.2 1191.0 975.0 C1191.8 967.8 1196.2 958.5 1201.0 948.0 C1205.8 937.5 1213.5 922.8 1220.0 912.0 C1226.5 901.2 1232.7 891.2 1240.0 883.0 C1247.3 874.8 1257.2 868.0 1264.0 863.0 C1270.8 858.0 1279.0 857.7 1281.0 853.0 C1283.0 848.3 1278.0 840.5 1276.0 835.0 C1274.0 829.5 1272.2 825.8 1269.0 820.0 C1265.8 814.2 1260.2 804.5 1257.0 800.5 C1253.8 796.5 1251.8 795.2 1249.5 796.0 C1247.2 796.8 1245.1 798.7 1243.5 805.0 C1241.9 811.3 1241.9 825.1 1240.0 834.0 C1238.1 842.9 1235.7 850.3 1232.0 858.5 C1228.3 866.7 1224.0 875.8 1218.0 883.0 C1212.0 890.2 1205.7 895.4 1196.0 902.0 C1186.3 908.6 1173.3 917.8 1160.0 922.5 C1146.7 927.2 1129.3 929.4 1116.0 930.0 C1102.7 930.6 1090.8 928.7 1080.0 926.0 C1069.2 923.3 1060.3 920.4 1051.0 914.0 C1041.7 907.6 1031.7 897.5 1024.0 887.5 C1016.3 877.5 1010.2 866.1 1005.0 854.0 C999.8 841.9 996.5 824.7 993.0 815.0 C989.5 805.3 991.7 792.0 984.0 796.0 C976.3 800.0 961.5 823.8 947.0 839.0 C932.5 854.2 906.1 871.3 897.0 887.5 C887.9 903.7 893.7 920.2 892.5 936.0 C891.3 951.8 891.4 972.0 890.0 982.0 C888.6 992.0 886.7 993.1 884.0 996.0 C881.3 998.9 876.8 1000.2 874.0 999.5 C871.2 998.8 868.7 996.9 867.0 991.5 C865.3 986.1 864.0 978.2 864.0 967.0 C864.0 955.8 865.7 938.8 867.0 924.0 C868.3 909.2 870.0 889.3 872.0 878.0 C874.0 866.7 869.3 871.7 879.0 856.0 C888.7 840.3 914.7 806.2 930.0 784.0 C945.3 761.8 961.0 738.0 971.0 723.0 C981.0 708.0 982.0 699.6 990.0 694.0Z"/></clipPath>
<filter id="b1"><feGaussianBlur stdDeviation="1"/></filter>
<filter id="b2"><feGaussianBlur stdDeviation="2"/></filter>
<filter id="b4"><feGaussianBlur stdDeviation="4"/></filter>
<filter id="b8"><feGaussianBlur stdDeviation="8"/></filter>
</defs>
<path d="M990.0 694.0 C998.0 688.4 1006.2 690.5 1019.0 689.3 C1031.8 688.1 1050.8 687.2 1067.0 687.0 C1083.2 686.8 1099.8 686.7 1116.0 688.0 C1132.2 689.3 1150.7 692.5 1164.0 695.0 C1177.3 697.5 1187.7 700.5 1196.0 703.0 C1204.3 705.5 1208.0 707.5 1214.0 710.0 C1220.0 712.5 1224.8 716.0 1232.0 718.0 C1239.2 720.0 1248.8 721.6 1257.0 722.0 C1265.2 722.4 1273.0 722.5 1281.0 720.5 C1289.0 718.5 1295.0 712.8 1305.0 710.0 C1315.0 707.2 1329.0 705.0 1341.0 704.0 C1353.0 703.0 1362.8 703.2 1377.0 704.0 C1391.2 704.8 1409.8 706.8 1426.0 709.0 C1442.2 711.2 1462.8 714.8 1474.0 717.0 C1485.2 719.2 1488.2 719.3 1493.0 722.0 C1497.8 724.7 1500.3 727.5 1503.0 733.0 C1505.7 738.5 1507.8 747.8 1509.0 755.0 C1510.2 762.2 1511.0 770.7 1510.0 776.0 C1509.0 781.3 1503.9 778.8 1503.0 787.0 C1502.1 795.2 1504.8 812.3 1504.5 825.0 C1504.2 837.7 1503.2 852.7 1501.0 863.0 C1498.8 873.3 1496.3 879.7 1491.0 887.0 C1485.7 894.3 1477.8 900.8 1469.0 907.0 C1460.2 913.2 1449.2 920.1 1438.0 924.0 C1426.8 927.9 1414.2 930.2 1402.0 930.5 C1389.8 930.8 1376.3 928.8 1365.0 926.0 C1353.7 923.2 1343.2 919.2 1334.0 914.0 C1324.8 908.8 1315.8 899.8 1310.0 895.0 C1304.2 890.2 1304.7 886.0 1299.0 885.5 C1293.3 885.0 1283.0 887.6 1276.0 892.0 C1269.0 896.4 1262.2 904.7 1257.0 912.0 C1251.8 919.3 1249.2 926.8 1245.0 936.0 C1240.8 945.2 1235.7 958.2 1232.0 967.0 C1228.3 975.8 1227.0 983.8 1223.0 989.0 C1219.0 994.2 1212.5 997.6 1208.0 998.0 C1203.5 998.4 1198.8 995.3 1196.0 991.5 C1193.2 987.7 1190.2 982.2 1191.0 975.0 C1191.8 967.8 1196.2 958.5 1201.0 948.0 C1205.8 937.5 1213.5 922.8 1220.0 912.0 C1226.5 901.2 1232.7 891.2 1240.0 883.0 C1247.3 874.8 1257.2 868.0 1264.0 863.0 C1270.8 858.0 1279.0 857.7 1281.0 853.0 C1283.0 848.3 1278.0 840.5 1276.0 835.0 C1274.0 829.5 1272.2 825.8 1269.0 820.0 C1265.8 814.2 1260.2 804.5 1257.0 800.5 C1253.8 796.5 1251.8 795.2 1249.5 796.0 C1247.2 796.8 1245.1 798.7 1243.5 805.0 C1241.9 811.3 1241.9 825.1 1240.0 834.0 C1238.1 842.9 1235.7 850.3 1232.0 858.5 C1228.3 866.7 1224.0 875.8 1218.0 883.0 C1212.0 890.2 1205.7 895.4 1196.0 902.0 C1186.3 908.6 1173.3 917.8 1160.0 922.5 C1146.7 927.2 1129.3 929.4 1116.0 930.0 C1102.7 930.6 1090.8 928.7 1080.0 926.0 C1069.2 923.3 1060.3 920.4 1051.0 914.0 C1041.7 907.6 1031.7 897.5 1024.0 887.5 C1016.3 877.5 1010.2 866.1 1005.0 854.0 C999.8 841.9 996.5 824.7 993.0 815.0 C989.5 805.3 991.7 792.0 984.0 796.0 C976.3 800.0 961.5 823.8 947.0 839.0 C932.5 854.2 906.1 871.3 897.0 887.5 C887.9 903.7 893.7 920.2 892.5 936.0 C891.3 951.8 891.4 972.0 890.0 982.0 C888.6 992.0 886.7 993.1 884.0 996.0 C881.3 998.9 876.8 1000.2 874.0 999.5 C871.2 998.8 868.7 996.9 867.0 991.5 C865.3 986.1 864.0 978.2 864.0 967.0 C864.0 955.8 865.7 938.8 867.0 924.0 C868.3 909.2 870.0 889.3 872.0 878.0 C874.0 866.7 869.3 871.7 879.0 856.0 C888.7 840.3 914.7 806.2 930.0 784.0 C945.3 761.8 961.0 738.0 971.0 723.0 C981.0 708.0 982.0 699.6 990.0 694.0Z" fill="url(#gF)"/>
<g clip-path="url(#cS)">
 <!-- salmon front-left face -->
 <ellipse cx="1020" cy="770" rx="28" ry="60" fill="#fa8c74" opacity="0.75" filter="url(#b8)"/>
 <ellipse cx="1030" cy="860" rx="18" ry="40" fill="#f7806a" opacity="0.5" filter="url(#b8)"/>
 <!-- left temple -->
 <path d="M990.0 694.0 C994.8 696.8 998.5 727.3 1000.0 740.0 C1001.5 752.7 1001.7 760.7 999.0 770.0 C996.3 779.3 992.7 784.5 984.0 796.0 C975.3 807.5 961.5 823.8 947.0 839.0 C932.5 854.2 906.1 871.3 897.0 887.5 C887.9 903.7 893.7 920.2 892.5 936.0 C891.3 951.8 891.4 972.0 890.0 982.0 C888.6 992.0 886.7 993.1 884.0 996.0 C881.3 998.9 876.8 1000.2 874.0 999.5 C871.2 998.8 868.7 996.9 867.0 991.5 C865.3 986.1 864.0 978.2 864.0 967.0 C864.0 955.8 865.7 938.8 867.0 924.0 C868.3 909.2 870.0 889.3 872.0 878.0 C874.0 866.7 869.3 871.7 879.0 856.0 C888.7 840.3 914.7 806.2 930.0 784.0 C945.3 761.8 961.0 738.0 971.0 723.0 C981.0 708.0 985.2 691.2 990.0 694.0Z" fill="url(#gTL)"/>
 <path d="M980 786 L889 882" stroke="#ea4a2a" stroke-width="2.6" opacity="0.75" filter="url(#b1)"/>
 <path d="M887 884 L882 930 L879 968" fill="none" stroke="#d9361d" stroke-width="5" opacity="0.85" filter="url(#b1)"/>
 <path d="M874 975 L878 996" stroke="#e8401f" stroke-width="8" opacity="0.6" filter="url(#b2)"/>
 <path d="M987 700 L968 726 L928 784 L878 856 L870 880 L866 930" fill="none" stroke="#f9957c" stroke-width="4" opacity="0.6" filter="url(#b2)"/>
 <!-- hinge side strip -->
 <path d="M990 702 L984 740 L984 764 L986 786" fill="none" stroke="#f4762a" stroke-width="17" opacity="0.95" filter="url(#b2)"/>
 <path d="M993 748 L990 772" stroke="#fca034" stroke-width="6" opacity="0.9" filter="url(#b2)"/>
 <path d="M975 716 L972 760" stroke="#ee5a30" stroke-width="4" opacity="0.6" filter="url(#b2)"/>
 <path d="M986 796 Q996 835 1018 876" fill="none" stroke="#f9957a" stroke-width="3" opacity="0.8" filter="url(#b1)"/>
 <!-- bottom red shading -->
 <path d="M1000 850 Q1030 905 1080 922 Q1120 932 1165 918 Q1210 895 1232 860 L1245 934 L1000 934 Z" fill="#ea342a" opacity="0.5" filter="url(#b4)"/>
 <path d="M1300 880 Q1340 918 1400 926 Q1450 924 1490 888 L1495 934 L1300 934 Z" fill="#e8362a" opacity="0.45" filter="url(#b4)"/>
 <path d="M1256 800 Q1282 852 1312 894" fill="none" stroke="#e8302a" stroke-width="10" opacity="0.75" filter="url(#b2)"/>
 <!-- right front temple -->
 <path d="M1299.0 885.5 C1296.7 889.5 1283.0 887.6 1276.0 892.0 C1269.0 896.4 1262.2 904.7 1257.0 912.0 C1251.8 919.3 1249.2 926.8 1245.0 936.0 C1240.8 945.2 1235.7 958.2 1232.0 967.0 C1228.3 975.8 1227.0 983.8 1223.0 989.0 C1219.0 994.2 1212.5 997.6 1208.0 998.0 C1203.5 998.4 1198.8 995.3 1196.0 991.5 C1193.2 987.7 1190.2 982.2 1191.0 975.0 C1191.8 967.8 1196.2 958.5 1201.0 948.0 C1205.8 937.5 1213.5 922.8 1220.0 912.0 C1226.5 901.2 1232.7 891.2 1240.0 883.0 C1247.3 874.8 1257.2 868.0 1264.0 863.0 C1270.8 858.0 1276.7 852.2 1281.0 853.0 C1285.3 853.8 1287.0 862.6 1290.0 868.0 C1293.0 873.4 1301.3 881.5 1299.0 885.5Z" fill="#f3672e"/>
 <path d="M1262 880 Q1232 915 1206 985" fill="none" stroke="#f99a5c" stroke-width="4.5" opacity="0.8" filter="url(#b2)"/>
 <path d="M1290 890 Q1255 920 1228 985" fill="none" stroke="#ea4f26" stroke-width="4" opacity="0.6" filter="url(#b2)"/>
 <!-- top edge highlight + red band -->
 <path d="M996 696 Q1100 684 1200 708 Q1255 728 1300 714 Q1400 698 1498 728" fill="none" stroke="#f9906e" stroke-width="5" opacity="0.7" filter="url(#b2)"/>
 <path d="M1004 705 Q1100 693 1198 716 Q1255 737 1302 723 Q1400 707 1492 736" fill="none" stroke="#ea3a28" stroke-width="4.5" opacity="0.6" filter="url(#b2)"/>
 <path d="M1250 745 Q1275 742 1290 750" fill="none" stroke="#f8906a" stroke-width="3" opacity="0.6" filter="url(#b1)"/>
 <path d="M1221 872 Q1233 832 1236 802 Q1240 782 1250 782 Q1262 784 1272 806 Q1286 838 1304 872" fill="none" stroke="#f9946c" stroke-width="2.4" opacity="0.8" filter="url(#b1)"/>
 <path d="M1253 779 Q1265 772 1279 777" fill="none" stroke="#fb9a2a" stroke-width="5" opacity="0.85" filter="url(#b2)"/>
 <path d="M1226 737 Q1262 748 1296 738" fill="none" stroke="#e8462a" stroke-width="4" opacity="0.55" filter="url(#b2)"/>
 <!-- right outer edge band -->
 <path d="M1494 730 Q1502 760 1500 784 L1496 830 Q1494 870 1470 900" fill="none" stroke="#f47a30" stroke-width="8" opacity="0.7" filter="url(#b2)"/>
</g>
<!-- groove + rim -->
<path d="M1037.6 724.2 C1044.7 717.9 1053.7 717.9 1066.8 715.9 C1079.8 713.8 1099.6 711.9 1116.0 712.1 C1132.3 712.3 1149.4 714.4 1165.0 717.1 C1180.7 719.8 1199.5 723.1 1209.9 728.3 C1220.2 733.5 1223.9 738.7 1227.0 748.4 C1230.1 758.0 1228.8 774.8 1228.4 786.2 C1228.0 797.5 1228.7 803.0 1224.6 816.4 C1220.5 829.9 1216.0 855.0 1204.0 866.8 C1192.1 878.7 1171.8 884.6 1152.9 887.6 C1133.9 890.7 1107.2 890.2 1090.3 885.1 C1073.4 879.9 1061.7 869.8 1051.4 856.8 C1041.2 843.7 1033.5 823.7 1028.9 806.6 C1024.3 789.5 1022.5 767.9 1023.9 754.1 C1025.4 740.4 1030.5 730.6 1037.6 724.2Z" fill="none" stroke="#fba88a" stroke-width="1.6" opacity="0.75"/>
<path d="M1297.3 736.8 C1306.2 730.7 1327.2 726.2 1344.4 724.0 C1361.6 721.9 1382.6 722.3 1400.5 724.0 C1418.4 725.7 1437.8 729.2 1451.7 734.3 C1465.6 739.4 1476.7 745.7 1483.9 754.9 C1491.1 764.1 1493.7 775.2 1495.0 789.6 C1496.3 803.9 1495.1 826.2 1491.9 841.0 C1488.7 855.9 1484.9 869.0 1475.6 878.5 C1466.3 888.0 1451.3 894.7 1436.0 897.9 C1420.7 901.1 1398.7 901.6 1383.8 897.9 C1368.9 894.1 1357.9 886.2 1346.6 875.6 C1335.2 865.1 1323.9 848.5 1315.7 834.5 C1307.5 820.5 1301.4 804.0 1297.3 791.6 C1293.1 779.2 1291.0 769.3 1291.0 760.2 C1291.0 751.1 1288.4 742.8 1297.3 736.8Z" fill="none" stroke="#fba88a" stroke-width="1.6" opacity="0.75"/>
<path d="M1040.9 728.0 C1047.3 722.4 1055.0 722.6 1067.5 720.8 C1080.0 719.0 1099.8 716.9 1115.9 717.1 C1132.0 717.3 1148.9 719.4 1164.2 722.0 C1179.5 724.6 1198.0 728.2 1207.7 732.8 C1217.4 737.4 1219.6 740.9 1222.2 749.8 C1224.8 758.7 1223.8 775.1 1223.4 786.0 C1223.0 796.9 1223.6 802.1 1219.8 815.0 C1216.0 827.9 1211.8 852.0 1200.5 863.3 C1189.2 874.6 1170.2 879.9 1152.1 882.7 C1134.0 885.5 1107.8 885.1 1091.7 880.3 C1075.6 875.5 1065.1 866.2 1055.4 853.7 C1045.7 841.2 1038.1 821.8 1033.7 805.3 C1029.3 788.8 1027.7 767.5 1028.9 754.6 C1030.1 741.7 1034.5 733.6 1040.9 728.0Z" fill="url(#gRim)"/>
<path d="M1300.0 741.0 C1308.2 735.8 1328.3 731.0 1345.0 729.0 C1361.7 727.0 1382.5 727.3 1400.0 729.0 C1417.5 730.7 1436.7 734.2 1450.0 739.0 C1463.3 743.8 1473.3 749.5 1480.0 758.0 C1486.7 766.5 1488.8 776.3 1490.0 790.0 C1491.2 803.7 1490.0 825.8 1487.0 840.0 C1484.0 854.2 1480.7 866.2 1472.0 875.0 C1463.3 883.8 1449.5 890.0 1435.0 893.0 C1420.5 896.0 1399.2 896.5 1385.0 893.0 C1370.8 889.5 1360.8 882.2 1350.0 872.0 C1339.2 861.8 1328.0 845.7 1320.0 832.0 C1312.0 818.3 1306.0 802.0 1302.0 790.0 C1298.0 778.0 1296.3 768.2 1296.0 760.0 C1295.7 751.8 1291.8 746.2 1300.0 741.0Z" fill="url(#gRim)"/>
<path d="M1040.9 728.0 C1047.3 722.4 1055.0 722.6 1067.5 720.8 C1080.0 719.0 1099.8 716.9 1115.9 717.1 C1132.0 717.3 1148.9 719.4 1164.2 722.0 C1179.5 724.6 1198.0 728.2 1207.7 732.8 C1217.4 737.4 1219.6 740.9 1222.2 749.8 C1224.8 758.7 1223.8 775.1 1223.4 786.0 C1223.0 796.9 1223.6 802.1 1219.8 815.0 C1216.0 827.9 1211.8 852.0 1200.5 863.3 C1189.2 874.6 1170.2 879.9 1152.1 882.7 C1134.0 885.5 1107.8 885.1 1091.7 880.3 C1075.6 875.5 1065.1 866.2 1055.4 853.7 C1045.7 841.2 1038.1 821.8 1033.7 805.3 C1029.3 788.8 1027.7 767.5 1028.9 754.6 C1030.1 741.7 1034.5 733.6 1040.9 728.0Z" fill="none" stroke="#e9532b" stroke-width="2.4" opacity="0.55" filter="url(#b1)"/>
<path d="M1300.0 741.0 C1308.2 735.8 1328.3 731.0 1345.0 729.0 C1361.7 727.0 1382.5 727.3 1400.0 729.0 C1417.5 730.7 1436.7 734.2 1450.0 739.0 C1463.3 743.8 1473.3 749.5 1480.0 758.0 C1486.7 766.5 1488.8 776.3 1490.0 790.0 C1491.2 803.7 1490.0 825.8 1487.0 840.0 C1484.0 854.2 1480.7 866.2 1472.0 875.0 C1463.3 883.8 1449.5 890.0 1435.0 893.0 C1420.5 896.0 1399.2 896.5 1385.0 893.0 C1370.8 889.5 1360.8 882.2 1350.0 872.0 C1339.2 861.8 1328.0 845.7 1320.0 832.0 C1312.0 818.3 1306.0 802.0 1302.0 790.0 C1298.0 778.0 1296.3 768.2 1296.0 760.0 C1295.7 751.8 1291.8 746.2 1300.0 741.0Z" fill="none" stroke="#e9532b" stroke-width="2.4" opacity="0.55" filter="url(#b1)"/>
<path d="M1044.9 732.5 C1050.4 727.8 1056.5 728.3 1068.4 726.7 C1080.2 725.2 1100.0 722.9 1115.8 723.1 C1131.6 723.3 1148.3 725.4 1163.2 727.9 C1178.1 730.4 1196.2 734.3 1205.1 738.2 C1214.0 742.1 1214.4 743.6 1216.4 751.5 C1218.5 759.4 1217.8 775.5 1217.4 785.8 C1217.0 796.1 1217.6 801.1 1214.0 813.3 C1210.5 825.5 1206.7 848.5 1196.3 859.1 C1185.8 869.6 1168.3 874.2 1151.2 876.8 C1134.0 879.4 1108.6 879.0 1093.4 874.6 C1078.3 870.1 1069.1 861.8 1060.1 850.0 C1051.2 838.2 1043.7 819.6 1039.5 803.8 C1035.3 787.9 1034.0 767.0 1034.9 755.2 C1035.8 743.3 1039.3 737.3 1044.9 732.5Z" fill="none" stroke="#fa9a5a" stroke-width="1.6" opacity="0.7"/>
<path d="M1303.2 746.1 C1310.5 741.9 1329.7 736.8 1345.7 735.0 C1361.8 733.1 1382.4 733.4 1399.4 735.0 C1416.5 736.6 1435.3 740.2 1448.0 744.6 C1460.6 749.1 1469.3 754.1 1475.3 761.7 C1481.3 769.3 1483.0 777.7 1484.0 790.5 C1485.0 803.4 1483.8 825.4 1481.1 838.8 C1478.4 852.1 1475.6 862.7 1467.7 870.8 C1459.8 878.9 1447.3 884.4 1433.8 887.1 C1420.2 889.9 1399.7 890.4 1386.4 887.2 C1373.2 883.9 1364.3 877.3 1354.1 867.6 C1343.9 857.9 1332.9 842.2 1325.2 829.0 C1317.4 815.7 1311.6 799.6 1307.7 788.1 C1303.8 776.6 1302.7 766.8 1302.0 759.8 C1301.2 752.7 1295.9 750.2 1303.2 746.1Z" fill="none" stroke="#fa9a5a" stroke-width="1.6" opacity="0.7"/>
<path d="M1050 733 Q1120 720 1198 737" fill="none" stroke="#ffa218" stroke-width="5" opacity="0.95" filter="url(#b2)"/>
<path d="M1316 744 Q1390 731 1464 751" fill="none" stroke="#fd9a22" stroke-width="4.5" opacity="0.85" filter="url(#b2)"/>
<path d="M1470 780 Q1482 815 1470 862" fill="none" stroke="#fb9a1e" stroke-width="6" opacity="0.8" filter="url(#b2)"/>
<!-- lenses -->
<path d="M1048.2 740.1 C1055.7 736.7 1076.4 734.8 1091.7 734.0 C1107.0 733.2 1124.7 733.5 1140.0 735.3 C1155.3 737.1 1173.2 739.7 1183.5 744.9 C1193.8 750.1 1198.5 758.2 1201.7 766.7 C1204.9 775.2 1204.3 784.4 1202.9 795.7 C1201.5 807.0 1198.0 823.8 1193.2 834.3 C1188.4 844.8 1182.8 853.2 1173.9 858.5 C1165.0 863.8 1151.7 865.0 1140.0 865.8 C1128.3 866.6 1113.9 866.2 1103.8 863.4 C1093.7 860.6 1086.4 855.3 1079.6 848.9 C1072.8 842.5 1067.5 835.2 1062.7 824.7 C1057.9 814.2 1053.2 797.7 1050.6 786.0 C1048.0 774.3 1047.4 762.2 1047.0 754.6 C1046.6 747.0 1040.8 743.5 1048.2 740.1Z" fill="url(#gLL)"/>
<g clip-path="url(#cLL)"><rect x="1040" y="730" width="170" height="80" fill="url(#gLLt)"/></g>
<path d="M1048.2 740.1 C1055.7 736.7 1076.4 734.8 1091.7 734.0 C1107.0 733.2 1124.7 733.5 1140.0 735.3 C1155.3 737.1 1173.2 739.7 1183.5 744.9 C1193.8 750.1 1198.5 758.2 1201.7 766.7 C1204.9 775.2 1204.3 784.4 1202.9 795.7 C1201.5 807.0 1198.0 823.8 1193.2 834.3 C1188.4 844.8 1182.8 853.2 1173.9 858.5 C1165.0 863.8 1151.7 865.0 1140.0 865.8 C1128.3 866.6 1113.9 866.2 1103.8 863.4 C1093.7 860.6 1086.4 855.3 1079.6 848.9 C1072.8 842.5 1067.5 835.2 1062.7 824.7 C1057.9 814.2 1053.2 797.7 1050.6 786.0 C1048.0 774.3 1047.4 762.2 1047.0 754.6 C1046.6 747.0 1040.8 743.5 1048.2 740.1Z" fill="none" stroke="#e87a55" stroke-width="4" opacity="0.5" filter="url(#b1)"/>
<path d="M1049.5 742.8 C1056.4 739.9 1076.8 737.8 1091.9 737.0 C1106.9 736.2 1124.6 736.5 1139.6 738.3 C1154.7 740.0 1172.3 742.7 1182.1 747.6 C1192.0 752.5 1195.9 759.8 1198.9 767.8 C1201.9 775.7 1201.3 784.4 1199.9 795.3 C1198.5 806.2 1195.1 822.9 1190.5 833.0 C1185.9 843.1 1180.8 851.0 1172.4 855.9 C1163.9 860.9 1151.1 862.0 1139.8 862.8 C1128.5 863.6 1114.3 863.2 1104.6 860.5 C1094.9 857.8 1088.2 852.9 1081.7 846.7 C1075.1 840.5 1070.1 833.7 1065.4 823.4 C1060.7 813.2 1056.1 796.8 1053.5 785.3 C1051.0 773.8 1050.7 761.5 1050.0 754.4 C1049.3 747.4 1042.5 745.7 1049.5 742.8Z" fill="none" stroke="#fbb498" stroke-width="1.8" opacity="0.8"/>
<path d="M1314.7 749.8 C1321.6 746.6 1338.9 743.3 1353.4 742.5 C1367.9 741.7 1386.4 742.9 1401.7 744.9 C1417.0 746.9 1434.7 750.2 1445.2 754.6 C1455.7 759.0 1460.1 764.6 1464.5 771.5 C1468.9 778.4 1471.4 784.4 1471.8 795.7 C1472.2 807.0 1469.7 827.9 1466.9 839.2 C1464.1 850.5 1461.7 857.3 1454.9 863.3 C1448.1 869.3 1436.8 873.4 1425.9 875.4 C1415.0 877.4 1399.7 878.2 1389.6 875.4 C1379.5 872.6 1373.9 867.0 1365.4 858.5 C1357.0 850.0 1346.6 836.8 1338.9 824.7 C1331.2 812.6 1323.9 796.5 1319.5 786.0 C1315.1 775.5 1313.1 767.8 1312.3 761.8 C1311.5 755.8 1307.8 753.0 1314.7 749.8Z" fill="url(#gLR)"/>
<g clip-path="url(#cLR)">
 <path d="M1338 824 L1444 764 L1482 786 L1366 860 Z" fill="#e9472c"/>
 <path d="M1338 825 L1444 765" stroke="#f26a3e" stroke-width="3" filter="url(#b1)"/>
 <path d="M1436 758 L1478 758 L1478 800 L1446 800 Z" fill="#e0502a" opacity="0.6" filter="url(#b1)"/>
</g>
<path d="M1314.7 749.8 C1321.6 746.6 1338.9 743.3 1353.4 742.5 C1367.9 741.7 1386.4 742.9 1401.7 744.9 C1417.0 746.9 1434.7 750.2 1445.2 754.6 C1455.7 759.0 1460.1 764.6 1464.5 771.5 C1468.9 778.4 1471.4 784.4 1471.8 795.7 C1472.2 807.0 1469.7 827.9 1466.9 839.2 C1464.1 850.5 1461.7 857.3 1454.9 863.3 C1448.1 869.3 1436.8 873.4 1425.9 875.4 C1415.0 877.4 1399.7 878.2 1389.6 875.4 C1379.5 872.6 1373.9 867.0 1365.4 858.5 C1357.0 850.0 1346.6 836.8 1338.9 824.7 C1331.2 812.6 1323.9 796.5 1319.5 786.0 C1315.1 775.5 1313.1 767.8 1312.3 761.8 C1311.5 755.8 1307.8 753.0 1314.7 749.8Z" fill="none" stroke="#e87a55" stroke-width="4" opacity="0.5" filter="url(#b1)"/>
<path d="M1316.0 752.5 C1322.4 749.9 1339.3 746.3 1353.6 745.5 C1367.8 744.7 1386.2 745.9 1401.3 747.9 C1416.4 749.9 1433.9 753.2 1444.0 757.4 C1454.1 761.6 1457.9 766.7 1462.0 773.1 C1466.1 779.5 1468.5 784.9 1468.8 795.8 C1469.1 806.7 1466.6 827.6 1464.0 838.5 C1461.3 849.3 1459.4 855.4 1452.9 861.1 C1446.5 866.7 1435.8 870.5 1425.4 872.5 C1414.9 874.4 1400.0 875.2 1390.4 872.5 C1380.8 869.8 1375.7 864.6 1367.5 856.4 C1359.4 848.1 1349.0 835.0 1341.4 823.1 C1333.9 811.2 1326.6 795.1 1322.3 784.8 C1317.9 774.5 1316.3 766.8 1315.3 761.4 C1314.2 756.0 1309.6 755.2 1316.0 752.5Z" fill="none" stroke="#fbb498" stroke-width="1.8" opacity="0.8"/>
<!-- marching ants -->
<path d="M990.0 694.0 C998.0 688.4 1006.2 690.5 1019.0 689.3 C1031.8 688.1 1050.8 687.2 1067.0 687.0 C1083.2 686.8 1099.8 686.7 1116.0 688.0 C1132.2 689.3 1150.7 692.5 1164.0 695.0 C1177.3 697.5 1187.7 700.5 1196.0 703.0 C1204.3 705.5 1208.0 707.5 1214.0 710.0 C1220.0 712.5 1224.8 716.0 1232.0 718.0 C1239.2 720.0 1248.8 721.6 1257.0 722.0 C1265.2 722.4 1273.0 722.5 1281.0 720.5 C1289.0 718.5 1295.0 712.8 1305.0 710.0 C1315.0 707.2 1329.0 705.0 1341.0 704.0 C1353.0 703.0 1362.8 703.2 1377.0 704.0 C1391.2 704.8 1409.8 706.8 1426.0 709.0 C1442.2 711.2 1462.8 714.8 1474.0 717.0 C1485.2 719.2 1488.2 719.3 1493.0 722.0 C1497.8 724.7 1500.3 727.5 1503.0 733.0 C1505.7 738.5 1507.8 747.8 1509.0 755.0 C1510.2 762.2 1511.0 770.7 1510.0 776.0 C1509.0 781.3 1503.9 778.8 1503.0 787.0 C1502.1 795.2 1504.8 812.3 1504.5 825.0 C1504.2 837.7 1503.2 852.7 1501.0 863.0 C1498.8 873.3 1496.3 879.7 1491.0 887.0 C1485.7 894.3 1477.8 900.8 1469.0 907.0 C1460.2 913.2 1449.2 920.1 1438.0 924.0 C1426.8 927.9 1414.2 930.2 1402.0 930.5 C1389.8 930.8 1376.3 928.8 1365.0 926.0 C1353.7 923.2 1343.2 919.2 1334.0 914.0 C1324.8 908.8 1315.8 899.8 1310.0 895.0 C1304.2 890.2 1304.7 886.0 1299.0 885.5 C1293.3 885.0 1283.0 887.6 1276.0 892.0 C1269.0 896.4 1262.2 904.7 1257.0 912.0 C1251.8 919.3 1249.2 926.8 1245.0 936.0 C1240.8 945.2 1235.7 958.2 1232.0 967.0 C1228.3 975.8 1227.0 983.8 1223.0 989.0 C1219.0 994.2 1212.5 997.6 1208.0 998.0 C1203.5 998.4 1198.8 995.3 1196.0 991.5 C1193.2 987.7 1190.2 982.2 1191.0 975.0 C1191.8 967.8 1196.2 958.5 1201.0 948.0 C1205.8 937.5 1213.5 922.8 1220.0 912.0 C1226.5 901.2 1232.7 891.2 1240.0 883.0 C1247.3 874.8 1257.2 868.0 1264.0 863.0 C1270.8 858.0 1279.0 857.7 1281.0 853.0 C1283.0 848.3 1278.0 840.5 1276.0 835.0 C1274.0 829.5 1272.2 825.8 1269.0 820.0 C1265.8 814.2 1260.2 804.5 1257.0 800.5 C1253.8 796.5 1251.8 795.2 1249.5 796.0 C1247.2 796.8 1245.1 798.7 1243.5 805.0 C1241.9 811.3 1241.9 825.1 1240.0 834.0 C1238.1 842.9 1235.7 850.3 1232.0 858.5 C1228.3 866.7 1224.0 875.8 1218.0 883.0 C1212.0 890.2 1205.7 895.4 1196.0 902.0 C1186.3 908.6 1173.3 917.8 1160.0 922.5 C1146.7 927.2 1129.3 929.4 1116.0 930.0 C1102.7 930.6 1090.8 928.7 1080.0 926.0 C1069.2 923.3 1060.3 920.4 1051.0 914.0 C1041.7 907.6 1031.7 897.5 1024.0 887.5 C1016.3 877.5 1010.2 866.1 1005.0 854.0 C999.8 841.9 996.5 824.7 993.0 815.0 C989.5 805.3 991.7 792.0 984.0 796.0 C976.3 800.0 961.5 823.8 947.0 839.0 C932.5 854.2 906.1 871.3 897.0 887.5 C887.9 903.7 893.7 920.2 892.5 936.0 C891.3 951.8 891.4 972.0 890.0 982.0 C888.6 992.0 886.7 993.1 884.0 996.0 C881.3 998.9 876.8 1000.2 874.0 999.5 C871.2 998.8 868.7 996.9 867.0 991.5 C865.3 986.1 864.0 978.2 864.0 967.0 C864.0 955.8 865.7 938.8 867.0 924.0 C868.3 909.2 870.0 889.3 872.0 878.0 C874.0 866.7 869.3 871.7 879.0 856.0 C888.7 840.3 914.7 806.2 930.0 784.0 C945.3 761.8 961.0 738.0 971.0 723.0 C981.0 708.0 982.0 699.6 990.0 694.0Z" fill="none" stroke="#ffffff" stroke-width="1.7"/>
<path d="M990.0 694.0 C998.0 688.4 1006.2 690.5 1019.0 689.3 C1031.8 688.1 1050.8 687.2 1067.0 687.0 C1083.2 686.8 1099.8 686.7 1116.0 688.0 C1132.2 689.3 1150.7 692.5 1164.0 695.0 C1177.3 697.5 1187.7 700.5 1196.0 703.0 C1204.3 705.5 1208.0 707.5 1214.0 710.0 C1220.0 712.5 1224.8 716.0 1232.0 718.0 C1239.2 720.0 1248.8 721.6 1257.0 722.0 C1265.2 722.4 1273.0 722.5 1281.0 720.5 C1289.0 718.5 1295.0 712.8 1305.0 710.0 C1315.0 707.2 1329.0 705.0 1341.0 704.0 C1353.0 703.0 1362.8 703.2 1377.0 704.0 C1391.2 704.8 1409.8 706.8 1426.0 709.0 C1442.2 711.2 1462.8 714.8 1474.0 717.0 C1485.2 719.2 1488.2 719.3 1493.0 722.0 C1497.8 724.7 1500.3 727.5 1503.0 733.0 C1505.7 738.5 1507.8 747.8 1509.0 755.0 C1510.2 762.2 1511.0 770.7 1510.0 776.0 C1509.0 781.3 1503.9 778.8 1503.0 787.0 C1502.1 795.2 1504.8 812.3 1504.5 825.0 C1504.2 837.7 1503.2 852.7 1501.0 863.0 C1498.8 873.3 1496.3 879.7 1491.0 887.0 C1485.7 894.3 1477.8 900.8 1469.0 907.0 C1460.2 913.2 1449.2 920.1 1438.0 924.0 C1426.8 927.9 1414.2 930.2 1402.0 930.5 C1389.8 930.8 1376.3 928.8 1365.0 926.0 C1353.7 923.2 1343.2 919.2 1334.0 914.0 C1324.8 908.8 1315.8 899.8 1310.0 895.0 C1304.2 890.2 1304.7 886.0 1299.0 885.5 C1293.3 885.0 1283.0 887.6 1276.0 892.0 C1269.0 896.4 1262.2 904.7 1257.0 912.0 C1251.8 919.3 1249.2 926.8 1245.0 936.0 C1240.8 945.2 1235.7 958.2 1232.0 967.0 C1228.3 975.8 1227.0 983.8 1223.0 989.0 C1219.0 994.2 1212.5 997.6 1208.0 998.0 C1203.5 998.4 1198.8 995.3 1196.0 991.5 C1193.2 987.7 1190.2 982.2 1191.0 975.0 C1191.8 967.8 1196.2 958.5 1201.0 948.0 C1205.8 937.5 1213.5 922.8 1220.0 912.0 C1226.5 901.2 1232.7 891.2 1240.0 883.0 C1247.3 874.8 1257.2 868.0 1264.0 863.0 C1270.8 858.0 1279.0 857.7 1281.0 853.0 C1283.0 848.3 1278.0 840.5 1276.0 835.0 C1274.0 829.5 1272.2 825.8 1269.0 820.0 C1265.8 814.2 1260.2 804.5 1257.0 800.5 C1253.8 796.5 1251.8 795.2 1249.5 796.0 C1247.2 796.8 1245.1 798.7 1243.5 805.0 C1241.9 811.3 1241.9 825.1 1240.0 834.0 C1238.1 842.9 1235.7 850.3 1232.0 858.5 C1228.3 866.7 1224.0 875.8 1218.0 883.0 C1212.0 890.2 1205.7 895.4 1196.0 902.0 C1186.3 908.6 1173.3 917.8 1160.0 922.5 C1146.7 927.2 1129.3 929.4 1116.0 930.0 C1102.7 930.6 1090.8 928.7 1080.0 926.0 C1069.2 923.3 1060.3 920.4 1051.0 914.0 C1041.7 907.6 1031.7 897.5 1024.0 887.5 C1016.3 877.5 1010.2 866.1 1005.0 854.0 C999.8 841.9 996.5 824.7 993.0 815.0 C989.5 805.3 991.7 792.0 984.0 796.0 C976.3 800.0 961.5 823.8 947.0 839.0 C932.5 854.2 906.1 871.3 897.0 887.5 C887.9 903.7 893.7 920.2 892.5 936.0 C891.3 951.8 891.4 972.0 890.0 982.0 C888.6 992.0 886.7 993.1 884.0 996.0 C881.3 998.9 876.8 1000.2 874.0 999.5 C871.2 998.8 868.7 996.9 867.0 991.5 C865.3 986.1 864.0 978.2 864.0 967.0 C864.0 955.8 865.7 938.8 867.0 924.0 C868.3 909.2 870.0 889.3 872.0 878.0 C874.0 866.7 869.3 871.7 879.0 856.0 C888.7 840.3 914.7 806.2 930.0 784.0 C945.3 761.8 961.0 738.0 971.0 723.0 C981.0 708.0 982.0 699.6 990.0 694.0Z" fill="none" stroke="#000000" stroke-width="1.7" stroke-dasharray="5 4.4"/>
</svg><!--GL_END-->
<div id="tbshadow" class="abs" style="left:765px;top:1086px;width:851px;height:46px;background:linear-gradient(180deg,rgba(110,95,80,0.20),rgba(110,95,80,0))"></div>
<!--OV_START--><svg class="abs" style="left:1554px;top:1151px" width="40" height="40" viewBox="-20 -20 40 40"><path d="M0 -18.5 C2.5 -7 7 -2.5 18.5 0 C7 2.5 2.5 7 0 18.5 C-2.5 7 -7 2.5 -18.5 0 C-7 -2.5 -2.5 -7 0 -18.5z" fill="#fcf3ea" opacity="0.9"/></svg>
<svg class="abs" style="left:1604px;top:1112px" width="12" height="20" viewBox="0 0 12 20"><path d="M12 3 C9 7 5 8 0 9 C5 10 9 12 12 16z" fill="#fdf5ee" opacity="0.8"/></svg>
<div class="abs" style="left:626px;top:1020px;width:1122px;height:70px;border-radius:9px;background:#535353;box-shadow:0 3px 10px rgba(0,0,0,0.35),0 0 2px rgba(0,0,0,0.4);overflow:hidden"><div class="abs" style="left:836px;top:0;width:286px;height:70px;background:#383838"></div></div>
<div class="abs" style="left:634px;top:1027px;width:9px;height:55px;border-radius:3px;background:#dcdcdc"></div>
<div class="abs" style="left:654px;top:1026px;width:348px;height:56px;border-radius:5px;background:#585858;border:2px solid #6e6e6e"></div>
<svg class="abs" style="left:672px;top:1032px" width="46" height="42" viewBox="0 0 46 42"><circle cx="19.5" cy="22" r="15.5" fill="none" stroke="#8c8c8c" stroke-width="2.2" stroke-dasharray="4.2 3.6"/><path d="M23.5 15.5 l1.6 4.3 l4.3 1.6 l-4.3 1.6 l-1.6 4.3 l-1.6 -4.3 l-4.3 -1.6 l4.3 -1.6z" fill="#8c8c8c"/><circle cx="35" cy="11.5" r="8.6" fill="#585858"/><circle cx="35" cy="11.5" r="6.8" fill="#4673c4"/></svg>
<div class="t" id="g1" style="letter-spacing:-0.08px;left:720.5px;top:1041px;font-size:25.5px;color:#8f8f8f">Генеративная заливка</div>
<svg class="abs" style="left:1029px;top:1040px" width="30" height="30" viewBox="0 0 30 30"><g fill="#dcdcdc"><path d="M27.9 1.8 C29 2.4 28.2 4.6 26.8 7 L20 17 L17.4 15.2 L24 5 C25.6 2.8 27 1.3 27.9 1.8z"/><ellipse cx="14.6" cy="18" rx="5.2" ry="3.9" transform="rotate(-38 14.6 18)"/><path d="M7 7.2 C2.5 13 1 21.5 5.5 26.6 C9.5 29.5 16 28.5 19.5 25 C14.5 27 9.5 25.6 7.6 21.6 C5.8 17.6 6 12 7 7.2z"/><path d="M10.8 9.6 C8.2 14 8 18.5 9.6 21.6 C9.4 17.6 9.8 13.6 10.8 9.6z"/><path d="M2.6 25.5 C5.5 29 10.5 30 15.5 29 C10.5 29.4 6.5 28.4 4.2 25.2z"/></g></svg>
<svg class="abs" style="left:1106.5px;top:1041.5px" width="27" height="27" viewBox="0 0 30 30"><rect x="14.5" y="1" width="14.5" height="28" fill="#dcdcdc"/><path d="M14 2.2 H2.2 V27.8 H14" fill="none" stroke="#dcdcdc" stroke-width="2.4" stroke-dasharray="5 3.4"/><path d="M6 15 L12 9.6 V13.4 H18 V9.6 L24.5 15 L18 20.4 V16.6 H12 V20.4 Z" fill="#535353"/><path d="M6.5 15 L12 10.4 V13.8 H15 V16.2 H12 V19.6 Z" fill="#dcdcdc"/></svg>
<svg class="abs" style="left:1182px;top:1042.5px" width="28" height="24.5" viewBox="0 0 30 26"><rect x="0" y="0" width="30" height="26" fill="#dcdcdc"/><circle cx="15" cy="13" r="8" fill="#535353"/></svg>
<svg class="abs" style="left:1256px;top:1040px" width="28" height="28" viewBox="1256 1040 28 28"><path d="M1258.1 1057.3 L1270 1046 L1279 1053.8 L1266.8 1066.1 Z" fill="#dcdcdc"/><path d="M1262.6 1042.3 L1272.3 1051.8" stroke="#535353" stroke-width="5.4" stroke-linecap="round"/><path d="M1262.6 1042.3 L1272.3 1051.8" stroke="#dcdcdc" stroke-width="2.6" stroke-linecap="round"/><path d="M1276 1051.4 C1280 1052 1282.4 1055 1282.2 1059.6 C1282.1 1061.6 1279.6 1061.6 1279.5 1059.6 C1279.4 1057.6 1278.8 1056.4 1277 1054.6z" fill="#dcdcdc"/></svg>
<svg class="abs" style="left:1335px;top:1041.6px" width="26.4" height="26.4" viewBox="0 0 28 28"><circle cx="14" cy="14" r="12.6" fill="none" stroke="#dcdcdc" stroke-width="2.4"/><path d="M22.9 5.1 A12.6 12.6 0 0 1 5.1 22.9 Z" fill="#dcdcdc"/></svg>
<svg class="abs" style="left:1409px;top:1051px" width="30" height="8" viewBox="0 0 30 8"><g fill="#dcdcdc"><circle cx="5.1" cy="4" r="3.2"/><circle cx="15" cy="4" r="3.2"/><circle cx="25.2" cy="4" r="3.2"/></g></svg>
<div class="t" id="g2" style="letter-spacing:-0.15px;left:1477.5px;top:1042px;font-size:25.5px;color:#ffffff">Отменить выделение</div>
<svg class="abs" style="left:70px;top:310px" width="280" height="120" viewBox="70 310 280 120"><path d="M82.5 362.5 L161.5 331.5 L164.5 334 L162 359 L334 391.5 Q338.5 400 329 414 L159 388.5 L150.5 415 L147.5 416 Z" fill="#ff0e00" stroke="#ff0e00" stroke-width="5" stroke-linejoin="round"/></svg>
<svg class="abs" style="left:1790px;top:80px" width="120" height="345" viewBox="1790 80 120 345"><path d="M1854.6 93 L1888.5 168.5 L1886.5 172 L1859.5 172.5 L1828.5 409.5 Q1816 413.5 1807 407.5 L1829.5 169 L1803.5 161 Z" fill="#ff0e00" stroke="#ff0e00" stroke-width="5" stroke-linejoin="round"/></svg><!--OV_END-->

<!-- ================= RIGHT PANEL ================= -->
<div id="rpanel" class="abs"></div>
<div class="abs" style="left:2150px;top:162px;width:32px;height:1356px;background:#4a4a4a"></div>
<div class="abs" style="left:2156px;top:553px;width:21px;height:506px;border-radius:11px;background:#6b6b6b"></div>
<div class="abs" style="left:2182px;top:104px;width:6px;height:1414px;background:#484848"></div>
<div class="abs" style="left:2182px;top:104px;width:2px;height:1414px;background:#3c3c3c"></div>
<div class="abs" style="left:2186px;top:104px;width:2px;height:1414px;background:#3a3a3a"></div>
<div class="abs" style="left:2188px;top:104px;width:592px;height:22px;background:#424242"></div>
<div class="hline" style="left:2188px;top:126px;width:592px;background:#383838"></div>
<div class="abs" style="left:2188px;top:128px;width:592px;height:54px;background:#424242"></div>
<div class="hline" style="left:2278px;top:181px;width:502px;background:#3a3a3a"></div>
<div class="abs" style="left:2188px;top:128px;width:90px;height:55px;background:#535353"></div>
<div class="vline" style="left:2278px;top:128px;height:54px;background:#393939"></div>
<div class="vline" style="left:2394px;top:128px;height:54px;background:#393939"></div>
<div class="vline" style="left:2482px;top:128px;height:54px;background:#393939"></div>
<div class="vline" style="left:2616px;top:128px;height:54px;background:#393939"></div>
<div class="t" id="p1" style="letter-spacing:-0.33px;left:2206px;top:145px;font-size:21.5px;font-weight:bold;-webkit-text-stroke:0;color:#f4f4f4">Слои</div>
<div class="t" id="p2" style="letter-spacing:-0.38px;left:2296px;top:145px;font-size:21.5px;font-weight:bold;-webkit-text-stroke:0;color:#b9b9b9">Каналы</div>
<div class="t" id="p3" style="letter-spacing:-0.33px;left:2414px;top:145px;font-size:21.5px;font-weight:bold;-webkit-text-stroke:0;color:#b9b9b9">Цвет</div>
<div class="t" id="p4" style="letter-spacing:-0.90px;left:2502px;top:145px;font-size:21.5px;font-weight:bold;-webkit-text-stroke:0;color:#b9b9b9">Свойства</div>
<div class="btn" style="left:2194px;top:202px;width:250px;height:36px;border-color:#606060"></div>
<svg class="abs" style="left:2212px;top:210px" width="22" height="22" viewBox="0 0 22 22"><circle cx="8.5" cy="8.5" r="6.6" fill="none" stroke="#e0e0e0" stroke-width="2.2"/><path d="M13.5 13.5 L20 20" stroke="#e0e0e0" stroke-width="2.8" stroke-linecap="round"/></svg>
<div class="t" id="p5" style="letter-spacing:-0.60px;left:2238px;top:210px;font-size:21.5px;color:#f0f0f0">Вид</div>
<svg class="abs" style="left:2422px;top:216px" width="14" height="10" viewBox="0 0 14 10"><path d="M1 1.5 L7 7.5 L13 1.5" fill="none" stroke="#e0e0e0" stroke-width="2"/></svg>
<svg class="abs" style="left:2535px;top:209px" width="26" height="22" viewBox="0 0 26 22"><rect x="1.1" y="1.6" width="23.8" height="18.8" fill="none" stroke="#e0e0e0" stroke-width="2.2"/><path d="M4.5 17.5 L10 9.5 L13.6 14.5 L16.5 11 L21.5 17.5 Z" fill="#e0e0e0"/></svg>
<svg class="abs" style="left:2584px;top:209px" width="23" height="23" viewBox="0 0 23 23"><circle cx="11.5" cy="11.5" r="10" fill="none" stroke="#e0e0e0" stroke-width="2.2"/><path d="M18.6 4.4 A10 10 0 0 1 4.4 18.6 Z" fill="#e0e0e0"/></svg>
<svg class="abs" style="left:2633px;top:210px" width="21" height="21" viewBox="0 0 21 21"><path d="M0.5 0.6 H20.5 V6 H18 V3.6 H12.2 V17.6 H15 V20.4 H6 V17.6 H8.8 V3.6 H3 V6 H0.5 Z" fill="#e0e0e0"/></svg>
<svg class="abs" style="left:2680px;top:208px" width="24" height="24" viewBox="0 0 24 24"><rect x="3.4" y="3.4" width="17.2" height="17.2" fill="none" stroke="#e0e0e0" stroke-width="2.2"/><g fill="#535353" stroke="#e0e0e0" stroke-width="1.6"><rect x="0.8" y="0.8" width="5" height="5"/><rect x="18.2" y="0.8" width="5" height="5"/><rect x="0.8" y="18.2" width="5" height="5"/><rect x="18.2" y="18.2" width="5" height="5"/></g></svg>
<svg class="abs" style="left:2730px;top:208px" width="23" height="25" viewBox="0 0 23 25"><path d="M7 8 V1.2 H16 L21.8 7 V21 H14" fill="none" stroke="#e0e0e0" stroke-width="2.2"/><path d="M15.5 1.5 V7.5 H21.5" fill="none" stroke="#e0e0e0" stroke-width="1.8"/><rect x="1" y="10.5" width="12.5" height="13.5" fill="#e0e0e0"/></svg>
<div class="hline" style="left:2188px;top:246px;width:592px;background:#434343"></div>
<div class="btn" style="left:2194px;top:258px;width:381px;height:36px;border-color:#606060"></div>
<div class="t" id="p6" style="letter-spacing:-0.40px;left:2210px;top:266px;font-size:21.5px;color:#f0f0f0">Обычные</div>
<svg class="abs" style="left:2553px;top:272px" width="14" height="10" viewBox="0 0 14 10"><path d="M1 1.5 L7 7.5 L13 1.5" fill="none" stroke="#e0e0e0" stroke-width="2"/></svg>
<div class="t" id="p7" style="letter-spacing:0.23px;left:2582px;top:266px;font-size:21.5px;color:#d8d8d8">Непрозрачность:</div>
<div class="btn" style="left:2759px;top:259px;width:40px;height:34px;border-color:#5a5a5a;border-radius:6px"></div>
<div class="t" style="left:2767px;top:266px;font-size:21.5px;color:#f0f0f0">100</div>
<div class="hline" style="left:2188px;top:302px;width:592px;background:#434343"></div>
<div class="t" id="p8" style="letter-spacing:0.06px;left:2198px;top:322px;font-size:21.5px;color:#d8d8d8">Закрепить:</div>
<svg class="abs" style="left:2321px;top:321px" width="24" height="24" viewBox="0 0 24 24"><rect x="1.1" y="1.1" width="21.8" height="21.8" fill="none" stroke="#e0e0e0" stroke-width="2.2"/><rect x="1.5" y="8.5" width="7" height="7" fill="#e0e0e0"/><rect x="8.5" y="1.5" width="7" height="7" fill="#e0e0e0"/><rect x="8.5" y="15.5" width="7" height="7" fill="#e0e0e0"/><rect x="15.5" y="8.5" width="7" height="7" fill="#e0e0e0"/></svg>
<svg class="abs" style="left:2364px;top:318px" width="28" height="28" viewBox="0 0 28 28"><g fill="#e0e0e0"><path d="M26.8 0.8 C28 1.4 27 4.5 24.8 8.2 L16.5 18 L12.8 15 L20.5 5.5 C23 2.3 25.8 0.3 26.8 0.8z"/><path d="M11.5 16.3 L15 19.4 C15.6 24 10.5 28 0.8 27.3 C4 25.3 3.4 22.6 5 19.6 C6.6 16.6 9.4 15.7 11.5 16.3z"/></g></svg>
<svg class="abs" style="left:2407px;top:319px" width="26" height="26" viewBox="0 0 26 26"><g fill="#e0e0e0"><rect x="11.9" y="4" width="2.2" height="18"/><rect x="4" y="11.9" width="18" height="2.2"/><path d="M13 0.3 L17.6 6.2 H8.4 Z M13 25.7 L17.6 19.8 H8.4 Z M0.3 13 L6.2 8.4 V17.6 Z M25.7 13 L19.8 8.4 V17.6 Z"/></g></svg>
<svg class="abs" style="left:2450px;top:319px" width="30" height="26" viewBox="0 0 30 26"><path d="M6 5.5 H19 L24.5 11 V20.5 H6 Z" fill="none" stroke="#e0e0e0" stroke-width="2.2"/><path d="M18.5 5.5 V11.5 H24.5" fill="none" stroke="#e0e0e0" stroke-width="1.8"/><g fill="#e0e0e0"><rect x="0.5" y="4.4" width="3.4" height="2.2"/><rect x="26" y="4.4" width="3.4" height="2.2"/><rect x="0.5" y="19.4" width="3.4" height="2.2"/><rect x="26" y="19.4" width="3.4" height="2.2"/><rect x="4.9" y="0.3" width="2.2" height="3.2"/><rect x="23.4" y="0.3" width="2.2" height="3.2"/><rect x="4.9" y="22.5" width="2.2" height="3.2"/><rect x="23.4" y="22.5" width="2.2" height="3.2"/></g></svg>
<svg class="abs" style="left:2498px;top:319px" width="22" height="25" viewBox="0 0 22 25"><path d="M5.3 11 V7.2 a5.7 5.7 0 0 1 11.4 0 V11" fill="none" stroke="#e0e0e0" stroke-width="2.6"/><rect x="0.6" y="10" width="20.8" height="14.4" rx="2" fill="#e0e0e0"/><circle cx="11" cy="17.2" r="2.3" fill="#535353"/></svg>
<div class="t" id="p9" style="letter-spacing:-0.14px;left:2667px;top:322px;font-size:21.5px;color:#d8d8d8">Заливка:</div>
<div class="btn" style="left:2759px;top:316px;width:40px;height:33px;border-color:#5a5a5a;border-radius:6px"></div>
<div class="t" style="left:2767px;top:323px;font-size:21.5px;color:#f0f0f0">100</div>
<div class="hline" style="left:2188px;top:362px;width:592px;background:#434343"></div>
<div class="abs" style="left:2248px;top:364px;width:532px;height:70px;background:#6b6b6b"></div>
<div class="hline" style="left:2188px;top:435px;width:592px;background:#454545"></div>
<svg class="abs" style="left:2205.6px;top:392.6px" width="25.6" height="15.6" viewBox="0 0 25.6 15.6"><path d="M0.2 7.8 C3.6 2.6 8 0.3 12.8 0.3 C17.6 0.3 22 2.6 25.4 7.8 C22 13 17.6 15.3 12.8 15.3 C8 15.3 3.6 13 0.2 7.8z" fill="#e0e0e0"/><circle cx="12.8" cy="7.9" r="5.6" fill="#535353"/><circle cx="14.4" cy="6.3" r="1.35" fill="#e0e0e0"/></svg>
<div class="abs" style="left:2252px;top:368px;width:73px;height:63px;background:#ffffff"></div>
<div class="abs" style="left:2255px;top:371px;width:67px;height:57px;background:#2e2e2e"></div>
<div class="abs" id="chk" style="left:2258px;top:374px;width:61px;height:51px;background-color:#fff;background-image:linear-gradient(45deg,#ccc 25%,transparent 25%,transparent 75%,#ccc 75%),linear-gradient(45deg,#ccc 25%,transparent 25%,transparent 75%,#ccc 75%);background-size:8px 8px;background-position:0 0,4px 4px"></div>
<div class="abs" style="left:2273px;top:387px;width:30px;height:25px;background:#f8ead9"></div>
<svg class="abs" style="left:2276px;top:392px" width="24" height="14" viewBox="0 0 24 14"><path d="M4.6 1.5 C9 0.6 11.5 1.6 13.2 2.6 C16 1.6 19.5 2 22.6 3 L23 6.5 C22.6 8.5 20.5 9.6 18 9.2 C16 9 15 8 14.6 6.6 L13.8 5.8 L13 6.5 C12.6 8.6 11 9.6 8.8 9.4 C6.4 9.2 5.2 7.6 4.8 5.6 L2 9 L1.6 12.6 L0.6 12.4 L0.8 8.5 Z M14.6 8.8 L12.4 10.6 L11.6 13 L12.6 13 L13.6 11 L15.8 9.6z" fill="#f0532c"/></svg>
<div class="t lname" id="l0" style="letter-spacing:-0.86px;top:390px">Слой 1</div>
<div class="hline" style="left:2188px;top:507px;width:592px;background:#454545"></div>
<svg class="abs" style="left:2205.6px;top:464.6px" width="25.6" height="15.6" viewBox="0 0 25.6 15.6"><path d="M0.2 7.8 C3.6 2.6 8 0.3 12.8 0.3 C17.6 0.3 22 2.6 25.4 7.8 C22 13 17.6 15.3 12.8 15.3 C8 15.3 3.6 13 0.2 7.8z" fill="#e0e0e0"/><circle cx="12.8" cy="7.9" r="5.6" fill="#535353"/><circle cx="14.4" cy="6.3" r="1.35" fill="#e0e0e0"/></svg>
<div class="abs" style="left:2256px;top:444px;width:65px;height:56px;background:#00b0df;border:3px solid #2c2c2c"></div>
<div class="t lname" id="l1" style="letter-spacing:-0.11px;top:462px">Слой 2 копия 4</div>
<div class="hline" style="left:2188px;top:579px;width:592px;background:#454545"></div>
<svg class="abs" style="left:2205.6px;top:536.6px" width="25.6" height="15.6" viewBox="0 0 25.6 15.6"><path d="M0.2 7.8 C3.6 2.6 8 0.3 12.8 0.3 C17.6 0.3 22 2.6 25.4 7.8 C22 13 17.6 15.3 12.8 15.3 C8 15.3 3.6 13 0.2 7.8z" fill="#e0e0e0"/><circle cx="12.8" cy="7.9" r="5.6" fill="#535353"/><circle cx="14.4" cy="6.3" r="1.35" fill="#e0e0e0"/></svg>
<div class="abs" style="left:2256px;top:516px;width:65px;height:56px;background:#d30024;border:3px solid #2c2c2c"></div>
<div class="t lname" id="l2" style="letter-spacing:-0.11px;top:534px">Слой 2 копия 7</div>
<div class="hline" style="left:2188px;top:651px;width:592px;background:#454545"></div>
<svg class="abs" style="left:2205.6px;top:608.6px" width="25.6" height="15.6" viewBox="0 0 25.6 15.6"><path d="M0.2 7.8 C3.6 2.6 8 0.3 12.8 0.3 C17.6 0.3 22 2.6 25.4 7.8 C22 13 17.6 15.3 12.8 15.3 C8 15.3 3.6 13 0.2 7.8z" fill="#e0e0e0"/><circle cx="12.8" cy="7.9" r="5.6" fill="#535353"/><circle cx="14.4" cy="6.3" r="1.35" fill="#e0e0e0"/></svg>
<div class="abs" style="left:2256px;top:588px;width:65px;height:56px;background:#00b35f;border:3px solid #2c2c2c"></div>
<div class="t lname" id="l3" style="letter-spacing:-0.11px;top:606px">Слой 2 копия 8</div>
<div class="hline" style="left:2188px;top:723px;width:592px;background:#454545"></div>
<svg class="abs" style="left:2205.6px;top:680.6px" width="25.6" height="15.6" viewBox="0 0 25.6 15.6"><path d="M0.2 7.8 C3.6 2.6 8 0.3 12.8 0.3 C17.6 0.3 22 2.6 25.4 7.8 C22 13 17.6 15.3 12.8 15.3 C8 15.3 3.6 13 0.2 7.8z" fill="#e0e0e0"/><circle cx="12.8" cy="7.9" r="5.6" fill="#535353"/><circle cx="14.4" cy="6.3" r="1.35" fill="#e0e0e0"/></svg>
<div class="abs" style="left:2256px;top:660px;width:65px;height:56px;background:#00b0df;border:3px solid #2c2c2c"></div>
<div class="t lname" id="l4" style="letter-spacing:-0.11px;top:678px">Слой 2 копия 3</div>
<div class="hline" style="left:2188px;top:795px;width:592px;background:#454545"></div>
<svg class="abs" style="left:2205.6px;top:752.6px" width="25.6" height="15.6" viewBox="0 0 25.6 15.6"><path d="M0.2 7.8 C3.6 2.6 8 0.3 12.8 0.3 C17.6 0.3 22 2.6 25.4 7.8 C22 13 17.6 15.3 12.8 15.3 C8 15.3 3.6 13 0.2 7.8z" fill="#e0e0e0"/><circle cx="12.8" cy="7.9" r="5.6" fill="#535353"/><circle cx="14.4" cy="6.3" r="1.35" fill="#e0e0e0"/></svg>
<div class="abs" style="left:2256px;top:732px;width:65px;height:56px;background:#00b0df;border:3px solid #2c2c2c"></div>
<div class="t lname" id="l5" style="letter-spacing:-0.11px;top:750px">Слой 2 копия 2</div>
<div class="hline" style="left:2188px;top:867px;width:592px;background:#454545"></div>
<svg class="abs" style="left:2205.6px;top:824.6px" width="25.6" height="15.6" viewBox="0 0 25.6 15.6"><path d="M0.2 7.8 C3.6 2.6 8 0.3 12.8 0.3 C17.6 0.3 22 2.6 25.4 7.8 C22 13 17.6 15.3 12.8 15.3 C8 15.3 3.6 13 0.2 7.8z" fill="#e0e0e0"/><circle cx="12.8" cy="7.9" r="5.6" fill="#535353"/><circle cx="14.4" cy="6.3" r="1.35" fill="#e0e0e0"/></svg>
<div class="abs" style="left:2256px;top:804px;width:65px;height:56px;background:#00b0df;border:3px solid #2c2c2c"></div>
<div class="t lname" id="l6" style="letter-spacing:-0.11px;top:822px">Слой 2 копия</div>
<div class="vline" style="left:2247px;top:364px;height:504px;background:#484848"></div>
<div class="abs" style="left:2188px;top:870px;width:592px;height:648px;background:#4e4e4e"></div>

</body>
</html>
